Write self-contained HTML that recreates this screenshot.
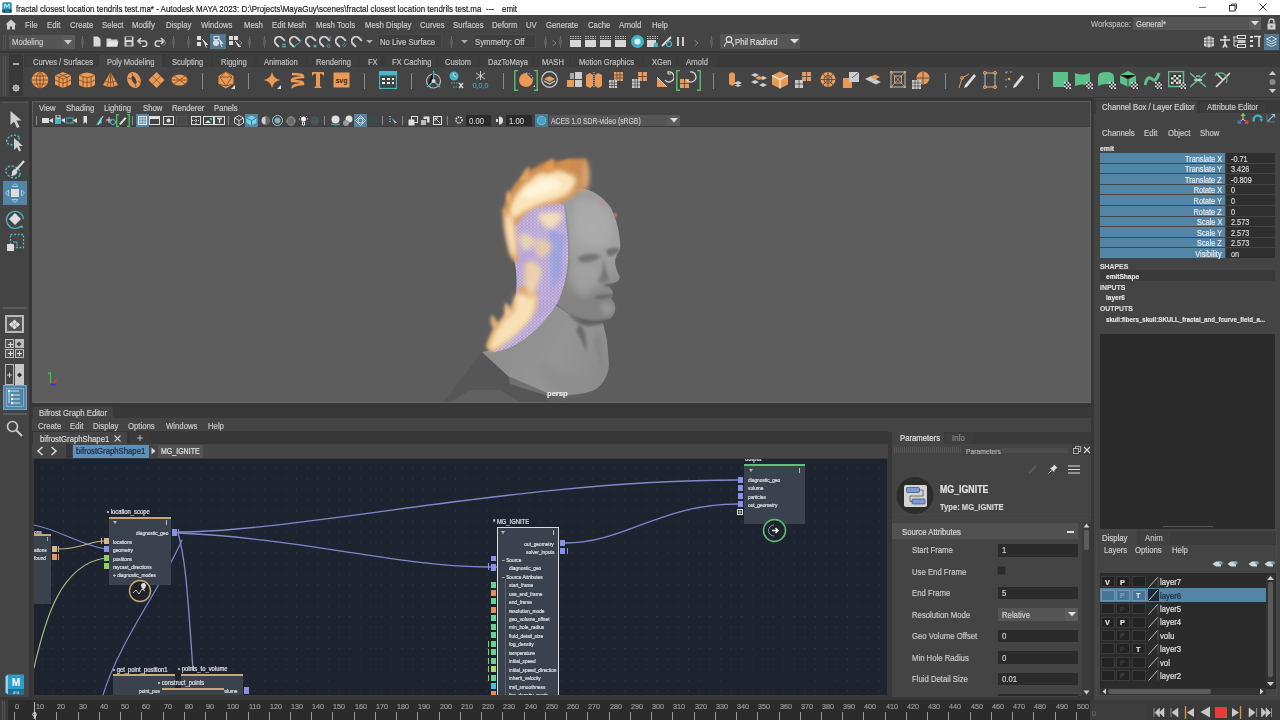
<!DOCTYPE html>
<html><head><meta charset="utf-8"><style>*{margin:0;padding:0;box-sizing:border-box}
html,body{width:1280px;height:720px;overflow:hidden;background:#444;font-family:"Liberation Sans",sans-serif}
.a{position:absolute;display:block}
.t{position:absolute;white-space:nowrap;line-height:1;transform-origin:0 0;-webkit-text-stroke:0.2px currentColor}
</style></head><body>
<div class="a" style="left:0px;top:0px;width:1280px;height:15px;background:#fff;"></div><svg class="a" style="left:2px;top:2px;" width="10" height="11" viewBox="0 0 10 11"><rect x="0.3" y="0.3" width="9.4" height="10.4" rx="1.5" fill="#2a8cb4"/><rect x="0.3" y="7.5" width="9.4" height="3.2" rx="1" fill="#17506e"/><path d="M2.2 6.5V1.8H3.6L5 4L6.4 1.8H7.8V6.5H6.7V3.6L5 5.8L3.3 3.6V6.5Z" fill="#b8f0fc"/><rect x="3" y="8.6" width="4" height="1" fill="#5a9ab8"/></svg><div class="t" style="left:15.5px;top:3.7px;font-size:9.5px;color:#1a1a1a;transform:scaleX(0.84);">fractal closest location tendrils test.ma* - Autodesk MAYA 2023: D:\Projects\MayaGuy\scenes\fractal closest location tendrils test.ma</div><div class="t" style="left:486.0px;top:3.7px;font-size:9.5px;color:#1a1a1a;transform:scaleX(0.84);">---</div><div class="t" style="left:502.0px;top:3.7px;font-size:9.5px;color:#1a1a1a;transform:scaleX(0.84);">emit</div><div class="a" style="left:1199px;top:6.5px;width:7px;height:1.5px;background:#7a7a7a;"></div><svg class="a" style="left:1228px;top:2px;" width="10" height="10" viewBox="0 0 10 10"><rect x="1.5" y="3.5" width="5.5" height="5.5" fill="none" stroke="#333" stroke-width="1"/><path d="M2.5 3.5L4 2H8.5V6.5L7 8" fill="none" stroke="#333" stroke-width="1"/></svg><svg class="a" style="left:1259px;top:3px;" width="8" height="8" viewBox="0 0 8 8"><path d="M0.5 0.5L7.5 7.5M7.5 0.5L0.5 7.5" stroke="#222" stroke-width="0.9"/></svg>
<div class="a" style="left:0px;top:15px;width:1280px;height:18px;background:#444;"></div><svg class="a" style="left:5px;top:19px;" width="12" height="11" viewBox="0 0 12 11"><path d="M6 0.5L0.5 5.5H2V10.5H5V7.5H7V10.5H10V5.5H11.5Z" fill="#d0d0d0"/></svg><div class="t" style="left:25.0px;top:20.9px;font-size:9px;color:#c8c8c8;transform:scaleX(0.86);">File</div><div class="t" style="left:46.6px;top:20.9px;font-size:9px;color:#c8c8c8;transform:scaleX(0.86);">Edit</div><div class="t" style="left:70.0px;top:20.9px;font-size:9px;color:#c8c8c8;transform:scaleX(0.86);">Create</div><div class="t" style="left:102.0px;top:20.9px;font-size:9px;color:#c8c8c8;transform:scaleX(0.86);">Select</div><div class="t" style="left:132.0px;top:20.9px;font-size:9px;color:#c8c8c8;transform:scaleX(0.86);">Modify</div><div class="t" style="left:166.0px;top:20.9px;font-size:9px;color:#c8c8c8;transform:scaleX(0.86);">Display</div><div class="t" style="left:201.0px;top:20.9px;font-size:9px;color:#c8c8c8;transform:scaleX(0.86);">Windows</div><div class="t" style="left:243.5px;top:20.9px;font-size:9px;color:#c8c8c8;transform:scaleX(0.86);">Mesh</div><div class="t" style="left:272.0px;top:20.9px;font-size:9px;color:#c8c8c8;transform:scaleX(0.86);">Edit Mesh</div><div class="t" style="left:316.0px;top:20.9px;font-size:9px;color:#c8c8c8;transform:scaleX(0.86);">Mesh Tools</div><div class="t" style="left:364.7px;top:20.9px;font-size:9px;color:#c8c8c8;transform:scaleX(0.86);">Mesh Display</div><div class="t" style="left:420.0px;top:20.9px;font-size:9px;color:#c8c8c8;transform:scaleX(0.86);">Curves</div><div class="t" style="left:452.8px;top:20.9px;font-size:9px;color:#c8c8c8;transform:scaleX(0.86);">Surfaces</div><div class="t" style="left:491.5px;top:20.9px;font-size:9px;color:#c8c8c8;transform:scaleX(0.86);">Deform</div><div class="t" style="left:526.4px;top:20.9px;font-size:9px;color:#c8c8c8;transform:scaleX(0.86);">UV</div><div class="t" style="left:546.4px;top:20.9px;font-size:9px;color:#c8c8c8;transform:scaleX(0.86);">Generate</div><div class="t" style="left:588.0px;top:20.9px;font-size:9px;color:#c8c8c8;transform:scaleX(0.86);">Cache</div><div class="t" style="left:619.0px;top:20.9px;font-size:9px;color:#c8c8c8;transform:scaleX(0.86);">Arnold</div><div class="t" style="left:652.0px;top:20.9px;font-size:9px;color:#c8c8c8;transform:scaleX(0.86);">Help</div><div class="t" style="left:1090.6px;top:20.4px;font-size:9px;color:#b8b8b8;transform:scaleX(0.84);">Workspace:</div><div class="a" style="left:1133px;top:17px;width:128px;height:13px;background:#555;"></div><div class="a" style="left:1249px;top:17px;width:12px;height:13px;background:#5e5e5e;"></div><div class="t" style="left:1136.0px;top:20.4px;font-size:9px;color:#d0d0d0;transform:scaleX(0.84);">General*</div><svg class="a" style="left:1251px;top:21px;" width="8" height="5" viewBox="0 0 8 5"><path d="M0 0H8L4 4.5Z" fill="#ddd"/></svg><svg class="a" style="left:1267px;top:18px;" width="9" height="12" viewBox="0 0 9 12"><path d="M2 5.5V3.5a2.5 2.5 0 0 1 5 0V5.5" fill="none" stroke="#d0d0d0" stroke-width="1.4"/><rect x="0.5" y="5.5" width="8" height="6" fill="#d0d0d0"/><rect x="3.5" y="7.5" width="2" height="2" fill="#777"/></svg>
<div class="a" style="left:0px;top:33px;width:1280px;height:19px;background:#444;"></div><div class="a" style="left:0px;top:51px;width:1280px;height:2px;background:#363636;"></div><div class="a" style="left:3px;top:35px;width:1px;height:14px;background:#555;"></div><div class="a" style="left:5px;top:35px;width:1px;height:14px;background:#555;"></div><div class="a" style="left:9px;top:35px;width:54px;height:14px;background:#555;"></div><div class="a" style="left:62px;top:35px;width:13px;height:14px;background:#5b5b5b;"></div><div class="t" style="left:11.5px;top:38.4px;font-size:9px;color:#c8c8c8;transform:scaleX(0.86);">Modeling</div><svg class="a" style="left:64px;top:40px;" width="8" height="5" viewBox="0 0 8 5"><path d="M0 0H8L4 4.5Z" fill="#ccc"/></svg><div class="a" style="left:82px;top:36px;width:1px;height:12px;background:#6a6a6a;"></div><div class="a" style="left:81px;top:39px;width:3px;height:6px;background:#5c5c5c;border-radius:1px"></div><div class="a" style="left:173px;top:36px;width:1px;height:12px;background:#6a6a6a;"></div><div class="a" style="left:172px;top:39px;width:3px;height:6px;background:#5c5c5c;border-radius:1px"></div><div class="a" style="left:188px;top:36px;width:1px;height:12px;background:#6a6a6a;"></div><div class="a" style="left:187px;top:39px;width:3px;height:6px;background:#5c5c5c;border-radius:1px"></div><div class="a" style="left:249px;top:36px;width:1px;height:12px;background:#6a6a6a;"></div><div class="a" style="left:248px;top:39px;width:3px;height:6px;background:#5c5c5c;border-radius:1px"></div><div class="a" style="left:264px;top:36px;width:1px;height:12px;background:#6a6a6a;"></div><div class="a" style="left:263px;top:39px;width:3px;height:6px;background:#5c5c5c;border-radius:1px"></div><div class="a" style="left:451px;top:36px;width:1px;height:12px;background:#6a6a6a;"></div><div class="a" style="left:450px;top:39px;width:3px;height:6px;background:#5c5c5c;border-radius:1px"></div><div class="a" style="left:545px;top:36px;width:1px;height:12px;background:#6a6a6a;"></div><div class="a" style="left:544px;top:39px;width:3px;height:6px;background:#5c5c5c;border-radius:1px"></div><svg class="a" style="left:93px;top:36px;" width="8" height="11" viewBox="0 0 8 11"><path d="M0.5 0.5H5L7.5 3V10.5H0.5Z" fill="#d8d8d8"/></svg><svg class="a" style="left:106px;top:37px;" width="13" height="10" viewBox="0 0 13 10"><path d="M0.5 1.5H4.5L5.5 2.5H11.5V9.5H0.5Z" fill="#cfcfcf"/><path d="M2.5 4.5H12.5L11 9.5H0.5Z" fill="#e6e6e6"/></svg><svg class="a" style="left:124px;top:36px;" width="10" height="11" viewBox="0 0 10 11"><rect x="0.5" y="0.5" width="9" height="10" fill="#d0d0d0"/><rect x="2" y="1" width="6" height="3" fill="#555"/><rect x="2.5" y="6" width="5" height="3.5" fill="#555"/></svg><svg class="a" style="left:137px;top:37px;" width="12" height="10" viewBox="0 0 12 10"><path d="M4 1L1 4L4 7M1 4H8A3 3 0 0 1 8 9.5H5" fill="none" stroke="#d0d0d0" stroke-width="1.6"/></svg><svg class="a" style="left:153px;top:37px;" width="12" height="10" viewBox="0 0 12 10"><path d="M8 1L11 4L8 7M11 4H4A3 3 0 0 0 4 9.5H7" fill="none" stroke="#d0d0d0" stroke-width="1.6"/></svg><svg class="a" style="left:197px;top:36px;" width="11" height="12" viewBox="0 0 11 12"><rect x="0" y="0" width="4" height="4" fill="#ddd"/><rect x="0" y="6" width="4" height="4" fill="#ddd"/><path d="M5 3L10.5 8.5L8 8.5L9.5 11.5" fill="#ddd" stroke="#ddd"/></svg><div class="a" style="left:210px;top:34px;width:16px;height:15px;background:#4f7896;"></div><svg class="a" style="left:212px;top:36px;" width="12" height="12" viewBox="0 0 12 12"><circle cx="4" cy="7" r="3" fill="#ddd"/><path d="M6 2L11 7.5L8.5 7.5L10 11" fill="#ddd" stroke="#ddd"/><rect x="2" y="0.5" width="5" height="3" fill="none" stroke="#ddd"/></svg><svg class="a" style="left:229px;top:36px;" width="12" height="12" viewBox="0 0 12 12"><rect x="0" y="0" width="4" height="4" fill="#ddd"/><rect x="5" y="0" width="4" height="4" fill="#ddd"/><rect x="0" y="5" width="4" height="4" fill="#ddd"/><path d="M6 5L11.5 10.5L9 10.5" fill="#ddd" stroke="#ddd"/></svg><svg class="a" style="left:238px;top:40px;" width="5" height="6" viewBox="0 0 5 6"><path d="M0.5 0L4 3L0.5 6" fill="none" stroke="#888"/></svg><svg class="a" style="left:162px;top:40px;" width="5" height="6" viewBox="0 0 5 6"><path d="M0.5 0L4 3L0.5 6" fill="none" stroke="#888"/></svg><svg class="a" style="left:274px;top:36px;" width="13" height="13" viewBox="0 0 13 13"><path d="M4.9 10.9L2 8A4.1 4.1 0 1 1 8 2L10.9 4.9" fill="none" stroke="#d0d0d0" stroke-width="1.9"/><path d="M8 8.5H12M8 10.5H12M9 7.5V12M11 7.5V12" stroke="#48b0b8" stroke-width="0.8"/></svg><svg class="a" style="left:289px;top:36px;" width="13" height="13" viewBox="0 0 13 13"><path d="M4.9 10.9L2 8A4.1 4.1 0 1 1 8 2L10.9 4.9" fill="none" stroke="#d0d0d0" stroke-width="1.9"/><path d="M5 12Q6 8 9 8Q11 7 12 4" fill="none" stroke="#48b0b8" stroke-width="1"/></svg><svg class="a" style="left:305px;top:36px;" width="13" height="13" viewBox="0 0 13 13"><path d="M4.9 10.9L2 8A4.1 4.1 0 1 1 8 2L10.9 4.9" fill="none" stroke="#d0d0d0" stroke-width="1.9"/><circle cx="10" cy="10" r="1.6" fill="#48b0b8"/></svg><svg class="a" style="left:319px;top:36px;" width="13" height="13" viewBox="0 0 13 13"><path d="M4.9 10.9L2 8A4.1 4.1 0 1 1 8 2L10.9 4.9" fill="none" stroke="#d0d0d0" stroke-width="1.9"/><circle cx="9.5" cy="10" r="1.4" fill="none" stroke="#48b0b8" stroke-width="0.8"/><circle cx="11" cy="1.5" r="1" fill="none" stroke="#48b0b8" stroke-width="0.6"/></svg><svg class="a" style="left:335px;top:36px;" width="13" height="13" viewBox="0 0 13 13"><path d="M4.9 10.9L2 8A4.1 4.1 0 1 1 8 2L10.9 4.9" fill="none" stroke="#d0d0d0" stroke-width="1.9"/><path d="M7 10L10 7M8.5 11.5L11.5 8.5" stroke="#48b0b8" stroke-width="0.9"/></svg><svg class="a" style="left:351px;top:36px;" width="13" height="13" viewBox="0 0 13 13"><path d="M4.9 10.9L2 8A4.1 4.1 0 1 1 8 2L10.9 4.9" fill="none" stroke="#d0d0d0" stroke-width="1.9"/></svg><svg class="a" style="left:366px;top:40px;" width="7" height="4" viewBox="0 0 7 4"><path d="M0 0H7L3.5 3.5Z" fill="#aaa"/></svg><div class="a" style="left:377px;top:34px;width:65px;height:14px;background:#3e3e3e;border:1px solid #4a4a4a"></div><div class="t" style="left:380.0px;top:37.9px;font-size:9px;color:#c8c8c8;transform:scaleX(0.86);">No Live Surface</div><svg class="a" style="left:461px;top:40px;" width="7" height="4" viewBox="0 0 7 4"><path d="M0 0H7L3.5 3.5Z" fill="#aaa"/></svg><div class="a" style="left:472px;top:34px;width:64px;height:14px;background:#3e3e3e;border:1px solid #4a4a4a"></div><div class="t" style="left:474.5px;top:37.9px;font-size:9px;color:#c8c8c8;transform:scaleX(0.86);">Symmetry: Off</div><svg class="a" style="left:552px;top:40px;" width="5" height="6" viewBox="0 0 5 6"><path d="M0.5 0L4 3L0.5 6" fill="none" stroke="#888"/></svg><div class="a" style="left:560px;top:36px;width:1px;height:12px;background:#6a6a6a;"></div><div class="a" style="left:559px;top:39px;width:3px;height:6px;background:#5c5c5c;border-radius:1px"></div><div class="a" style="left:592px;top:36px;width:1px;height:12px;background:#6a6a6a;"></div><div class="a" style="left:591px;top:39px;width:3px;height:6px;background:#5c5c5c;border-radius:1px"></div><svg class="a" style="left:570px;top:36px;" width="11" height="11" viewBox="0 0 11 11"><path d="M0 0.5H11M0 2.5H11" stroke="#bbb" stroke-dasharray="1.5 1"/><rect x="0" y="4" width="11" height="7" fill="#d8d8d8"/></svg><svg class="a" style="left:585px;top:36px;" width="11" height="11" viewBox="0 0 11 11"><path d="M0 0.5H11M0 2.5H11" stroke="#bbb" stroke-dasharray="1.5 1"/><rect x="0" y="4" width="11" height="7" fill="#d8d8d8"/></svg><svg class="a" style="left:600px;top:36px;" width="11" height="11" viewBox="0 0 11 11"><path d="M0 0.5H11M0 2.5H11" stroke="#bbb" stroke-dasharray="1.5 1"/><rect x="0" y="4" width="11" height="7" fill="#d8d8d8"/></svg><svg class="a" style="left:615px;top:36px;" width="11" height="11" viewBox="0 0 11 11"><path d="M0 0.5H11M0 2.5H11" stroke="#bbb" stroke-dasharray="1.5 1"/><rect x="0" y="4" width="11" height="7" fill="#d8d8d8"/></svg><svg class="a" style="left:631px;top:35px;" width="13" height="13" viewBox="0 0 13 13"><circle cx="6.5" cy="6.5" r="6.5" fill="#42b4c8"/><circle cx="6.5" cy="6.5" r="3" fill="#d8f0f4"/></svg><svg class="a" style="left:647px;top:36px;" width="11" height="11" viewBox="0 0 11 11"><path d="M0 0.5H11M0 2.5H11" stroke="#bbb" stroke-dasharray="1.5 1"/><rect x="0" y="4" width="9" height="7" fill="#d8d8d8"/><circle cx="9" cy="9" r="2.5" fill="#48b0c8"/></svg><svg class="a" style="left:661px;top:36px;" width="11" height="11" viewBox="0 0 11 11"><path d="M1 10L10 1" stroke="#ddd" stroke-width="2"/><circle cx="8" cy="8" r="2.5" fill="none" stroke="#48b0c8" stroke-width="1.3"/></svg><div class="a" style="left:677px;top:37px;width:2px;height:9px;background:#ccc;"></div><div class="a" style="left:682px;top:37px;width:2px;height:9px;background:#ccc;"></div><svg class="a" style="left:694px;top:40px;" width="5" height="6" viewBox="0 0 5 6"><path d="M0.5 0L4 3L0.5 6" fill="none" stroke="#888"/></svg><div class="a" style="left:711px;top:36px;width:1px;height:12px;background:#6a6a6a;"></div><div class="a" style="left:710px;top:39px;width:3px;height:6px;background:#5c5c5c;border-radius:1px"></div><div class="a" style="left:720px;top:34px;width:80px;height:15px;background:#555;"></div><svg class="a" style="left:724px;top:36px;" width="10" height="11" viewBox="0 0 10 11"><circle cx="5" cy="3.5" r="2.8" fill="none" stroke="#ddd" stroke-width="1.2"/><path d="M0.5 10.5A4.5 4.5 0 0 1 9.5 10.5" fill="none" stroke="#ddd" stroke-width="1.2"/></svg><div class="t" style="left:735.0px;top:38.4px;font-size:9px;color:#dcdcdc;transform:scaleX(0.86);">Phil Radford</div><svg class="a" style="left:790px;top:39px;" width="9" height="5" viewBox="0 0 9 5"><path d="M0 0H9L4.5 4.5Z" fill="#ddd"/></svg><svg class="a" style="left:1203px;top:35px;" width="12" height="13" viewBox="0 0 12 13"><path d="M1 3L6 1L11 3V11L6 12.5L1 11Z" fill="#cfcfcf"/><path d="M1 5H11M1 8H11M4 2V12M8 2V12" stroke="#555" stroke-width="0.8"/></svg><svg class="a" style="left:1219px;top:35px;" width="12" height="13" viewBox="0 0 12 13"><circle cx="6" cy="2" r="1.6" fill="#ddd"/><path d="M1 5H11M6 4V9M6 9L4 12.5M6 9L8 12.5" stroke="#ddd" stroke-width="1.6"/></svg><svg class="a" style="left:1233px;top:35px;" width="13" height="13" viewBox="0 0 13 13"><rect x="4.5" y="0.5" width="8" height="3" fill="none" stroke="#ddd"/><rect x="4.5" y="5" width="8" height="3" fill="#ccc"/><rect x="4.5" y="9.5" width="8" height="3" fill="none" stroke="#ddd"/><path d="M0 2H4M1 6H4M1 11H4M1 2V11" stroke="#ddd"/></svg><svg class="a" style="left:1250px;top:35px;" width="12" height="13" viewBox="0 0 12 13"><rect x="0" y="1" width="3" height="2" fill="#ddd"/><rect x="0" y="5" width="3" height="2" fill="#ddd"/><rect x="0" y="10" width="3" height="2" fill="#ddd"/><path d="M4 1.5H11M9 1V12" stroke="#ddd" stroke-width="1.6"/></svg><div class="a" style="left:1264px;top:34px;width:15px;height:16px;background:#4f7896;"></div><svg class="a" style="left:1266px;top:36px;" width="11" height="12" viewBox="0 0 11 12"><path d="M5.5 0.5L10.5 3L5.5 5.5L0.5 3Z" fill="none" stroke="#ddd"/><path d="M0.5 5.5L5.5 8L10.5 5.5M0.5 8L5.5 10.5L10.5 8" fill="none" stroke="#ddd"/></svg>
<div class="a" style="left:0px;top:53px;width:1280px;height:45px;background:#444;"></div><div class="a" style="left:0px;top:97px;width:1280px;height:4px;background:#373737;"></div><div class="a" style="left:3px;top:56px;width:1px;height:40px;background:#555;"></div><div class="a" style="left:5px;top:56px;width:1px;height:40px;background:#555;"></div><div class="a" style="left:9px;top:54px;width:14px;height:42px;background:#393939;"></div><div class="a" style="left:13px;top:63px;width:6px;height:2px;background:#aaa;"></div><svg class="a" style="left:12px;top:84px;" width="8" height="8" viewBox="0 0 8 8"><circle cx="4" cy="4" r="2.4" fill="none" stroke="#bbb" stroke-width="1.4"/><path d="M4 0V8M0 4H8M1.2 1.2L6.8 6.8M6.8 1.2L1.2 6.8" stroke="#bbb" stroke-width="0.9"/></svg><div class="a" style="left:24px;top:54px;width:1256px;height:13px;background:#3a3a3a;"></div><div class="a" style="left:26px;top:55px;width:71px;height:12px;background:#3d3d3d;"></div><div class="t" style="left:33.0px;top:57.9px;font-size:9px;color:#c0c0c0;transform:scaleX(0.84);">Curves / Surfaces</div><div class="a" style="left:99px;top:55px;width:63px;height:12px;background:#444;"></div><div class="t" style="left:106.5px;top:57.9px;font-size:9px;color:#c0c0c0;transform:scaleX(0.84);">Poly Modeling</div><div class="a" style="left:165px;top:55px;width:46px;height:12px;background:#3d3d3d;"></div><div class="t" style="left:172.0px;top:57.9px;font-size:9px;color:#c0c0c0;transform:scaleX(0.84);">Sculpting</div><div class="a" style="left:213px;top:55px;width:41px;height:12px;background:#3d3d3d;"></div><div class="t" style="left:220.6px;top:57.9px;font-size:9px;color:#c0c0c0;transform:scaleX(0.84);">Rigging</div><div class="a" style="left:257px;top:55px;width:49px;height:12px;background:#3d3d3d;"></div><div class="t" style="left:264.0px;top:57.9px;font-size:9px;color:#c0c0c0;transform:scaleX(0.84);">Animation</div><div class="a" style="left:308px;top:55px;width:50px;height:12px;background:#3d3d3d;"></div><div class="t" style="left:315.6px;top:57.9px;font-size:9px;color:#c0c0c0;transform:scaleX(0.84);">Rendering</div><div class="a" style="left:360px;top:55px;width:21px;height:12px;background:#3d3d3d;"></div><div class="t" style="left:367.5px;top:57.9px;font-size:9px;color:#c0c0c0;transform:scaleX(0.84);">FX</div><div class="a" style="left:385px;top:55px;width:51px;height:12px;background:#3d3d3d;"></div><div class="t" style="left:392.0px;top:57.9px;font-size:9px;color:#c0c0c0;transform:scaleX(0.84);">FX Caching</div><div class="a" style="left:438px;top:55px;width:40px;height:12px;background:#3d3d3d;"></div><div class="t" style="left:445.0px;top:57.9px;font-size:9px;color:#c0c0c0;transform:scaleX(0.84);">Custom</div><div class="a" style="left:480px;top:55px;width:52px;height:12px;background:#3d3d3d;"></div><div class="t" style="left:487.5px;top:57.9px;font-size:9px;color:#c0c0c0;transform:scaleX(0.84);">DazToMaya</div><div class="a" style="left:535px;top:55px;width:34px;height:12px;background:#3d3d3d;"></div><div class="t" style="left:542.0px;top:57.9px;font-size:9px;color:#c0c0c0;transform:scaleX(0.84);">MASH</div><div class="a" style="left:571px;top:55px;width:71px;height:12px;background:#3d3d3d;"></div><div class="t" style="left:578.5px;top:57.9px;font-size:9px;color:#c0c0c0;transform:scaleX(0.84);">Motion Graphics</div><div class="a" style="left:644px;top:55px;width:32px;height:12px;background:#3d3d3d;"></div><div class="t" style="left:651.5px;top:57.9px;font-size:9px;color:#c0c0c0;transform:scaleX(0.84);">XGen</div><div class="a" style="left:679px;top:55px;width:38px;height:12px;background:#3d3d3d;"></div><div class="t" style="left:686.0px;top:57.9px;font-size:9px;color:#c0c0c0;transform:scaleX(0.84);">Arnold</div><div class="a" style="left:24px;top:67px;width:1256px;height:1px;background:#444;"></div><svg class="a" style="left:31px;top:71px;" width="19" height="19" viewBox="0 0 19 19"><circle cx="9" cy="9" r="8.3" fill="#e89a56"/><path d="M1 9H17M2.5 5H15.5M2.5 13H15.5M9 0.7V17.3M9 0.7C4 4 4 14 9 17.3M9 0.7C14 4 14 14 9 17.3" fill="none" stroke="#7a4a20" stroke-width="0.8"/></svg><svg class="a" style="left:54px;top:71px;" width="19" height="19" viewBox="0 0 19 19"><path d="M9 1L17 4.5V13.5L9 17L1 13.5V4.5Z" fill="#e89a56"/><path d="M1 4.5L9 8L17 4.5M9 8V17M5 2.8L13 6.3M13 2.8L5 6.3M1 9L9 12.5L17 9M5 6.3V15.3M13 6.3V15.3" fill="none" stroke="#7a4a20" stroke-width="0.8"/></svg><svg class="a" style="left:78px;top:71px;" width="19" height="19" viewBox="0 0 19 19"><path d="M1 4Q9 -1 17 4V14Q9 19 1 14Z" fill="#e89a56"/><path d="M1 4Q9 9 17 4M1 9Q9 14 17 9M9 6.5V17M5 5.5V16M13 5.5V16" fill="none" stroke="#7a4a20" stroke-width="0.8"/></svg><svg class="a" style="left:102px;top:71px;" width="19" height="19" viewBox="0 0 19 19"><path d="M8.5 1L16 14Q8.5 18 1 14Z" fill="#e89a56"/><path d="M8.5 1V16.5M3 10Q8.5 13 14 10M8.5 1L5 15.5M8.5 1L12 15.5" fill="none" stroke="#7a4a20" stroke-width="0.8"/></svg><svg class="a" style="left:126px;top:71px;" width="19" height="19" viewBox="0 0 19 19"><ellipse cx="8" cy="9" rx="6.5" ry="8.3" fill="#e89a56" transform="rotate(-25 8 9)"/><ellipse cx="8" cy="9" rx="2" ry="4.2" fill="#444" transform="rotate(-25 8 9)"/><path d="M2 7L5 8M12 10L15 12M6 2L7 5M9 13L10 16" stroke="#7a4a20" stroke-width="0.8"/></svg><svg class="a" style="left:148px;top:71px;" width="19" height="19" viewBox="0 0 19 19"><path d="M8.5 1L16.5 9L8.5 17L0.5 9Z" fill="#e89a56"/><path d="M4.5 5L12.5 13M12.5 5L4.5 13" stroke="#7a4a20" stroke-width="0.8"/></svg><svg class="a" style="left:171px;top:71px;" width="19" height="19" viewBox="0 0 19 19"><ellipse cx="8.5" cy="9" rx="8" ry="5.5" fill="#e89a56"/><path d="M0.5 9H16.5M3 5L14 13M14 5L3 13" stroke="#7a4a20" stroke-width="0.8"/></svg><svg class="a" style="left:217px;top:71px;" width="19" height="19" viewBox="0 0 19 19"><path d="M9 0.5L16.5 5V13L9 17.5L1.5 13V5Z" fill="#e89a56"/><path d="M3 6H15L9 15ZM9 0.5L3 6M9 0.5L15 6M1.5 13L9 15L16.5 13" fill="none" stroke="#7a4a20" stroke-width="0.8"/><path d="M14 18L18 14V18Z" fill="#ddd"/></svg><svg class="a" style="left:263px;top:71px;" width="19" height="19" viewBox="0 0 19 19"><path d="M9 0.5Q10 8 17.5 9Q10 10 9 17.5Q8 10 0.5 9Q8 8 9 0.5Z" fill="#e89a56"/><path d="M14 18L18 14V18Z" fill="#ddd"/></svg><svg class="a" style="left:289px;top:71px;" width="19" height="19" viewBox="0 0 19 19"><path d="M3 3Q15 3 14 6Q2 7 3 10Q15 10 14 13Q2 14 4 17" fill="none" stroke="#e89a56" stroke-width="2.6"/></svg><svg class="a" style="left:311px;top:71px;" width="19" height="19" viewBox="0 0 19 19"><path d="M1 1H13V4.5H12Q11.5 2.5 9 2.5V15.5H10.5V17H3.5V15.5H5V2.5Q2.5 2.5 2 4.5H1Z" fill="#e89a56"/></svg><svg class="a" style="left:333px;top:71px;" width="19" height="19" viewBox="0 0 19 19"><rect x="0.5" y="1.5" width="16" height="15" fill="#e89a56"/><text x="8.5" y="11.5" font-size="7" fill="#3a2a1a" text-anchor="middle" font-family="Liberation Sans" font-weight="bold">svg</text></svg><div class="a" style="left:202px;top:73px;width:1px;height:16px;background:#8a8a8a;"></div><div class="a" style="left:248px;top:73px;width:1px;height:16px;background:#8a8a8a;"></div><div class="a" style="left:364px;top:73px;width:1px;height:16px;background:#8a8a8a;"></div><div class="a" style="left:411px;top:73px;width:1px;height:16px;background:#8a8a8a;"></div><div class="a" style="left:503px;top:73px;width:1px;height:16px;background:#8a8a8a;"></div><div class="a" style="left:713px;top:73px;width:1px;height:16px;background:#8a8a8a;"></div><div class="a" style="left:945px;top:73px;width:1px;height:16px;background:#8a8a8a;"></div><div class="a" style="left:1038px;top:73px;width:1px;height:16px;background:#8a8a8a;"></div><svg class="a" style="left:379px;top:71px;" width="18" height="18" viewBox="0 0 18 18"><rect x="0.5" y="0.5" width="17" height="17" fill="none" stroke="#48b8c8" stroke-width="1.2"/><rect x="0.5" y="0.5" width="17" height="4" fill="#48b8c8"/><path d="M3 8H6M8 8H11M13 8H15M3 12H6M8 12H11M13 12H15" stroke="#cfe" stroke-width="2"/></svg><svg class="a" style="left:425px;top:71px;" width="17" height="18" viewBox="0 0 17 18"><circle cx="8.5" cy="10" r="7" fill="none" stroke="#bbb" stroke-width="1.2"/><path d="M8.5 0V10L2 16M8.5 10L15 16" stroke="#48b8c8" stroke-width="1.3"/><circle cx="8.5" cy="10" r="2" fill="#ddd"/></svg><svg class="a" style="left:449px;top:71px;" width="15" height="18" viewBox="0 0 15 18"><circle cx="5" cy="5" r="4.5" fill="#48b8c8"/><path d="M5 2V5H7.5" stroke="#fff" stroke-width="1"/><path d="M2 12H10M4 16H9" stroke="#48b8c8" stroke-dasharray="1.5 1"/><path d="M10 12L14 17M14 12L10 17" stroke="#ddd" stroke-width="1.3"/></svg><svg class="a" style="left:471px;top:71px;" width="19" height="18" viewBox="0 0 19 18"><path d="M9.5 0V9M5 2L14 8M14 2L5 8" stroke="#ccc" stroke-width="1"/><text x="9.5" y="17" font-size="7" fill="#48b8c8" text-anchor="middle" font-family="Liberation Sans">0,0,0</text></svg><svg class="a" style="left:514px;top:70px;" width="24" height="21" viewBox="0 0 24 21"><path d="M4 0.5H0.8V20.2H4M20 0.5H23.2V20.2H20" fill="none" stroke="#4fc46a" stroke-width="1.4"/><path d="M12 3A7 7 0 1 0 19 10" fill="#e89a56"/><path d="M12 3A7 7 0 0 1 19 10" fill="none" stroke="#ccc" stroke-dasharray="1.5 1.2"/><path d="M19 17L21 15V17Z" fill="#ddd"/></svg><svg class="a" style="left:541px;top:71px;" width="17" height="17" viewBox="0 0 17 17"><circle cx="8.5" cy="8.5" r="7.8" fill="none" stroke="#ccc" stroke-width="1.2"/><path d="M3 8L8.5 5L14 8L8.5 11Z" fill="#e89a56"/><path d="M3 10L8.5 13L14 10" fill="none" stroke="#ccc" stroke-width="1.2"/></svg><svg class="a" style="left:567px;top:72px;" width="15" height="16" viewBox="0 0 15 16"><rect x="0" y="8" width="7" height="7" fill="#e89a56"/><rect x="8" y="0" width="7" height="7" fill="#ccc"/><rect x="8" y="8" width="7" height="7" fill="#ccc"/><rect x="0" y="0" width="7" height="7" fill="#444"/><rect x="3" y="1" width="4" height="6" fill="#aaa"/></svg><svg class="a" style="left:586px;top:72px;" width="16" height="16" viewBox="0 0 16 16"><path d="M0 3L4 1L7 3V14L4 16L0 14Z" fill="#e89a56"/><path d="M9 3L12 1L16 3V14L12 16L9 14Z" fill="#e89a56"/><path d="M8 0V16" stroke="#ddd" stroke-dasharray="1 1"/></svg><svg class="a" style="left:609px;top:72px;" width="14" height="16" viewBox="0 0 14 16"><rect x="5" y="0" width="9" height="9" fill="#e89a56"/><path d="M5 3H14M5 6H14M8 0V9M11 0V9" stroke="#444" stroke-width="0.7"/><rect x="0" y="8" width="8" height="8" fill="#ccc"/><path d="M0 11H8M0 13.5H8M3 8V16M5.5 8V16" stroke="#444" stroke-width="0.7"/></svg><svg class="a" style="left:632px;top:72px;" width="15" height="16" viewBox="0 0 15 16"><rect x="6" y="0" width="9" height="9" fill="#e89a56"/><path d="M6 4.5H15M10.5 0V9" stroke="#444" stroke-width="0.8"/><rect x="0" y="7" width="8" height="9" fill="#ccc"/><path d="M0 10H8M0 13H8M3 7V16M5.5 7V16" stroke="#444" stroke-width="0.7"/></svg><svg class="a" style="left:657px;top:71px;" width="17" height="18" viewBox="0 0 17 18"><path d="M0 6L10 16H0Z" fill="#e89a56"/><path d="M0 6L10 16" stroke="#ccc"/><path d="M11 1A5 5 0 1 1 8 9" fill="none" stroke="#ddd" stroke-width="1.2"/><path d="M11 0V3H14" fill="none" stroke="#ddd"/></svg><svg class="a" style="left:676px;top:70px;" width="25" height="21" viewBox="0 0 25 21"><path d="M4 0.5H0.8V20.2H4M21 0.5H24.2V20.2H21" fill="none" stroke="#4fc46a" stroke-width="1.4"/><rect x="4" y="9" width="9" height="9" fill="#e89a56"/><path d="M4 13.5H13M8.5 9V18" stroke="#444" stroke-width="0.8"/><path d="M14 2A5 5 0 1 1 11 10" fill="none" stroke="#ddd" stroke-width="1.2"/></svg><svg class="a" style="left:728px;top:72px;" width="14" height="16" viewBox="0 0 14 16"><path d="M1 2L4 0L7 2V12L4 14L1 12Z" fill="#e89a56"/><path d="M6 11L10 9L14 11L10 13ZM6 13L10 15L14 13" fill="#ccc"/></svg><svg class="a" style="left:750px;top:72px;" width="19" height="16" viewBox="0 0 19 16"><path d="M1 3L5 1L9 3L5 5ZM9 6L13 4L17 6L13 8ZM1 10L5 8L9 10L5 12ZM9 13L13 11L17 13L13 15Z" fill="#ccc"/><path d="M5 6L9 4L13 6L9 8Z" fill="#e89a56"/></svg><svg class="a" style="left:771px;top:71px;" width="18" height="18" viewBox="0 0 18 18"><path d="M9 0.5L17 4.5V13.5L9 17.5L1 13.5V4.5Z" fill="#e89a56"/><path d="M1 4.5L9 8.5L17 4.5M9 8.5V17.5" fill="none" stroke="#eee" stroke-width="1.2"/></svg><svg class="a" style="left:795px;top:72px;" width="16" height="16" viewBox="0 0 16 16"><rect x="7" y="0" width="9" height="9" fill="#e89a56"/><path d="M7 4.5H16M11.5 0V9" stroke="#444" stroke-width="0.8"/><rect x="0" y="8" width="8" height="8" fill="#ccc"/><path d="M0 12H8M4 8V16" stroke="#444" stroke-width="0.8"/></svg><svg class="a" style="left:820px;top:71px;" width="16" height="17" viewBox="0 0 16 17"><circle cx="8" cy="8.5" r="7.5" fill="#e89a56"/><circle cx="8" cy="8.5" r="4" fill="none" stroke="#444" stroke-width="0.8"/><path d="M0.5 8.5H15.5M8 1V16M3 3L13 14M13 3L3 14" stroke="#444" stroke-width="0.8"/></svg><svg class="a" style="left:843px;top:72px;" width="16" height="16" viewBox="0 0 16 16"><path d="M0 6H9V16H0Z" fill="#e89a56"/><path d="M6 0H16V10H6Z" fill="#ccc"/><path d="M0 6L6 0M9 6L16 0M9 16L16 10" stroke="#444" stroke-width="0.8"/></svg><svg class="a" style="left:865px;top:72px;" width="17" height="14" viewBox="0 0 17 14"><path d="M0 7L6 4L12 7L6 10Z" fill="#ccc"/><path d="M5 5L10 2.5L15 5L10 7.5Z" fill="#e89a56"/><path d="M6 10L11 12.5L16 10L11 7.5Z" fill="#ccc"/></svg><svg class="a" style="left:890px;top:71px;" width="16" height="17" viewBox="0 0 16 17"><rect x="1" y="1" width="14" height="15" fill="none" stroke="#bbb"/><rect x="4.5" y="5" width="7" height="7" fill="none" stroke="#e89a56"/><path d="M1 1L15 16M15 1L1 16" stroke="#bbb" stroke-width="0.7"/><circle cx="1" cy="1" r="1.3" fill="#e89a56"/><circle cx="15" cy="16" r="1.3" fill="#e89a56"/><circle cx="15" cy="1" r="1.3" fill="#e89a56"/><circle cx="1" cy="16" r="1.3" fill="#e89a56"/></svg><svg class="a" style="left:912px;top:71px;" width="18" height="18" viewBox="0 0 18 18"><circle cx="11" cy="7" r="6.5" fill="#e89a56"/><path d="M4.5 7H17.5M11 0.5V13.5" stroke="#444" stroke-width="0.8"/><rect x="0" y="9" width="9" height="9" fill="#ccc"/><path d="M0 12H9M0 15H9M3 9V18M6 9V18" stroke="#444" stroke-width="0.7"/></svg><svg class="a" style="left:958px;top:72px;" width="18" height="17" viewBox="0 0 18 17"><path d="M1 16L4 6L11 2" fill="none" stroke="#e89a56" stroke-width="1"/><circle cx="4" cy="6" r="1.5" fill="none" stroke="#e89a56"/><path d="M7 13L16 2L18 4L9 15L6 16Z" fill="#ddd"/></svg><svg class="a" style="left:983px;top:71px;" width="19" height="18" viewBox="0 0 19 18"><rect x="2" y="2" width="10" height="14" fill="none" stroke="#bbb"/><circle cx="2" cy="2" r="1.6" fill="none" stroke="#e89a56"/><circle cx="12" cy="2" r="1.6" fill="none" stroke="#e89a56"/><circle cx="2" cy="16" r="1.6" fill="none" stroke="#e89a56"/><circle cx="12" cy="16" r="1.6" fill="none" stroke="#e89a56"/></svg><svg class="a" style="left:1005px;top:71px;" width="20" height="18" viewBox="0 0 20 18"><path d="M1 1H4M1 1V4M1 8V11M1 15V18M5 1H8" stroke="#bbb" stroke-dasharray="1.5 1.5"/><path d="M9 14L17 4L19 6L11 16L8 17Z" fill="#ddd"/><circle cx="4" cy="8" r="1.3" fill="#e89a56"/></svg><svg class="a" style="left:1053px;top:71px;" width="19" height="19" viewBox="0 0 19 19"><rect x="0" y="1" width="15" height="15" fill="#5cc08a"/><rect x="11" y="11" width="7" height="7" fill="#222"/><path d="M11 11h1.75v1.75H11zM14.5 11h1.75v1.75H14.5zM12.75 12.75h1.75v1.75h-1.75zM16.25 12.75H18v1.75h-1.75zM11 14.5h1.75v1.75H11zM14.5 14.5h1.75v1.75H14.5zM12.75 16.25h1.75V18h-1.75zM16.25 16.25H18V18h-1.75z" fill="#eee"/></svg><svg class="a" style="left:1075px;top:71px;" width="19" height="19" viewBox="0 0 19 19"><path d="M0 2Q7 5 15 2V15Q7 12 0 15Z" fill="#5cc08a"/><rect x="11" y="11" width="7" height="7" fill="#222"/><path d="M11 11h1.75v1.75H11zM14.5 11h1.75v1.75H14.5zM12.75 12.75h1.75v1.75h-1.75zM16.25 12.75H18v1.75h-1.75zM11 14.5h1.75v1.75H11zM14.5 14.5h1.75v1.75H14.5zM12.75 16.25h1.75V18h-1.75zM16.25 16.25H18V18h-1.75z" fill="#eee"/></svg><svg class="a" style="left:1098px;top:71px;" width="19" height="19" viewBox="0 0 19 19"><path d="M0 6Q0 1 8 1Q16 1 16 6V15Q8 11 0 15Z" fill="#5cc08a"/><rect x="11" y="11" width="7" height="7" fill="#222"/><path d="M11 11h1.75v1.75H11zM14.5 11h1.75v1.75H14.5zM12.75 12.75h1.75v1.75h-1.75zM16.25 12.75H18v1.75h-1.75zM11 14.5h1.75v1.75H11zM14.5 14.5h1.75v1.75H14.5zM12.75 16.25h1.75V18h-1.75zM16.25 16.25H18V18h-1.75z" fill="#eee"/></svg><svg class="a" style="left:1120px;top:71px;" width="19" height="19" viewBox="0 0 19 19"><path d="M8 0L16 4V12L8 16L0 12V4Z" fill="#5cc08a"/><path d="M0 4L8 8L16 4M8 8V16" stroke="#444" stroke-width="1"/><rect x="11" y="11" width="7" height="7" fill="#222"/><path d="M11 11h1.75v1.75H11zM14.5 11h1.75v1.75H14.5zM12.75 12.75h1.75v1.75h-1.75zM16.25 12.75H18v1.75h-1.75zM11 14.5h1.75v1.75H11zM14.5 14.5h1.75v1.75H14.5zM12.75 16.25h1.75V18h-1.75zM16.25 16.25H18V18h-1.75z" fill="#eee"/></svg><svg class="a" style="left:1144px;top:71px;" width="19" height="19" viewBox="0 0 19 19"><path d="M1 14Q3 4 8 8Q12 12 15 2" fill="none" stroke="#5cc08a" stroke-width="3"/><rect x="11" y="11" width="7" height="7" fill="#222"/><path d="M11 11h1.75v1.75H11zM14.5 11h1.75v1.75H14.5zM12.75 12.75h1.75v1.75h-1.75zM16.25 12.75H18v1.75h-1.75zM11 14.5h1.75v1.75H11zM14.5 14.5h1.75v1.75H14.5zM12.75 16.25h1.75V18h-1.75zM16.25 16.25H18V18h-1.75z" fill="#eee"/></svg><svg class="a" style="left:1168px;top:71px;" width="19" height="19" viewBox="0 0 19 19"><rect x="0.5" y="0.5" width="15" height="15" fill="none" stroke="#5cc08a" stroke-width="1.5"/><rect x="3" y="4" width="10" height="9" fill="#ddd"/><path d="M3 4h2.5v2.25H3zM8 4h2.5v2.25H8zM5.5 6.25h2.5v2.25H5.5zM10.5 6.25H13v2.25h-2.5zM3 8.5h2.5v2.25H3zM8 8.5h2.5v2.25H8zM5.5 10.75h2.5V13H5.5zM10.5 10.75H13V13h-2.5z" fill="#333"/><rect x="11" y="11" width="7" height="7" fill="#222"/><path d="M11 11h1.75v1.75H11zM14.5 11h1.75v1.75H14.5zM12.75 12.75h1.75v1.75h-1.75zM16.25 12.75H18v1.75h-1.75zM11 14.5h1.75v1.75H11zM14.5 14.5h1.75v1.75H14.5zM12.75 16.25h1.75V18h-1.75zM16.25 16.25H18V18h-1.75z" fill="#eee"/></svg><svg class="a" style="left:1190px;top:71px;" width="19" height="19" viewBox="0 0 19 19"><path d="M0 2L8 9L16 2M0 16L8 9L16 16" fill="none" stroke="#5cc08a" stroke-width="1.6"/><path d="M4 9H12" stroke="#ddd" stroke-width="1.5"/><path d="M6 5L10 5" stroke="#ddd"/></svg><svg class="a" style="left:1214px;top:71px;" width="19" height="19" viewBox="0 0 19 19"><path d="M2 16L16 2M2 2L9 9" stroke="#ddd" stroke-width="1.6"/><path d="M1 5A6 6 0 0 1 12 12" fill="none" stroke="#5cc08a" stroke-width="1.2"/></svg><svg class="a" style="left:1268px;top:70px;" width="9" height="24" viewBox="0 0 9 24"><path d="M1 5L4.5 1L8 5Z" fill="#ccc"/><circle cx="4.5" cy="12" r="3" fill="#888"/><path d="M1 19L4.5 23L8 19Z" fill="#ccc"/></svg>
<div class="a" style="left:0px;top:101px;width:30px;height:599px;background:#444;"></div><div class="a" style="left:29px;top:101px;width:3px;height:599px;background:#373737;"></div><div class="a" style="left:2px;top:102px;width:26px;height:1px;background:#555;"></div><svg class="a" style="left:9px;top:110px;" width="14" height="19" viewBox="0 0 14 19"><path d="M1.5 1L12.5 10.5H7.5L10.5 17L8 18L5 11.5L1.5 15Z" fill="#d0d0d0"/></svg><svg class="a" style="left:5px;top:133px;" width="20" height="19" viewBox="0 0 20 19"><ellipse cx="8" cy="7" rx="6.5" ry="4.5" fill="none" stroke="#48b8c8" stroke-width="1.5" stroke-dasharray="2 1.5" transform="rotate(-20 8 7)"/><path d="M9 5L18 13H14L16 17.5L14 18.5L12 14L9 17Z" fill="#d0d0d0"/></svg><svg class="a" style="left:4px;top:159px;" width="22" height="21" viewBox="0 0 22 21"><ellipse cx="9" cy="13" rx="7.5" ry="5.5" fill="none" stroke="#48b8c8" stroke-width="1.5" stroke-dasharray="2.2 1.6" transform="rotate(25 9 13)"/><path d="M20 2L12 11" stroke="#d8d8d8" stroke-width="2.2"/><path d="M12 10Q8 10 8 14Q8 16 7 17Q12 17 13.5 13Z" fill="#d8d8d8"/></svg><div class="a" style="left:3px;top:181px;width:24px;height:24px;background:#5285a6;"></div><svg class="a" style="left:5px;top:183px;" width="20" height="20" viewBox="0 0 20 20"><rect x="6" y="6" width="8" height="8" fill="#ddd"/><path d="M10 0.5L13 3.5H7ZM10 19.5L13 16.5H7ZM0.5 10L3.5 7V13ZM19.5 10L16.5 7V13Z" fill="none" stroke="#9fd8e8" stroke-width="0.9"/></svg><svg class="a" style="left:5px;top:209px;" width="20" height="21" viewBox="0 0 20 21"><path d="M10 4L16 10L10 16L4 10Z" fill="#ddd"/><path d="M16 17A8.5 8.5 0 1 1 18.5 10" fill="none" stroke="#48b8c8" stroke-width="1.3"/><path d="M17 16L18.5 19L15 18.5" fill="#48b8c8"/></svg><svg class="a" style="left:5px;top:233px;" width="20" height="20" viewBox="0 0 20 20"><rect x="5.5" y="1.5" width="13" height="13" fill="none" stroke="#48b8c8" stroke-width="1.3" stroke-dasharray="2 1.5"/><rect x="2" y="11" width="7" height="7" fill="#ddd"/><path d="M8 9H12V13" fill="none" stroke="#48b8c8"/></svg><div class="a" style="left:3px;top:307px;width:24px;height:2px;background:#5b5b5b;"></div><div class="a" style="left:5px;top:315px;width:19px;height:18px;background:#b8b8b8;"></div><div class="a" style="left:7px;top:317px;width:15px;height:14px;background:#555;"></div><svg class="a" style="left:9px;top:319px;" width="11" height="10" viewBox="0 0 11 10"><path d="M5.5 0.5L8 3L5.5 5.5L3 3Z M2.5 3L5 5.5L2.5 8L0 5.5Z M8.5 3L11 5.5L8.5 8L6 5.5Z M5.5 5.5L8 8L5.5 10.5L3 8Z" fill="#ddd"/></svg><div class="a" style="left:5px;top:339px;width:9px;height:9px;background:#bbb;"></div><div class="a" style="left:6px;top:340px;width:7px;height:7px;background:#555;"></div><div class="a" style="left:15px;top:339px;width:9px;height:9px;background:#bbb;"></div><div class="a" style="left:16px;top:340px;width:7px;height:7px;background:#555;"></div><div class="a" style="left:5px;top:349px;width:9px;height:9px;background:#bbb;"></div><div class="a" style="left:6px;top:350px;width:7px;height:7px;background:#555;"></div><div class="a" style="left:15px;top:349px;width:9px;height:9px;background:#bbb;"></div><div class="a" style="left:16px;top:350px;width:7px;height:7px;background:#555;"></div><svg class="a" style="left:6px;top:340px;" width="18" height="18" viewBox="0 0 18 18"><path d="M4.5 2V7M2 4.5H7M4.5 11V16M2 13.5H7M13.5 11V16M11 13.5H16" stroke="#ddd" stroke-width="1.1"/><path d="M13.5 2.5L15.5 4.5L13.5 6.5L11.5 4.5Z" fill="#ddd"/></svg><div class="a" style="left:15px;top:340px;width:8px;height:8px;background:#bbb;"></div><svg class="a" style="left:16px;top:341px;" width="6" height="6" viewBox="0 0 6 6"><path d="M3 0.5L5.5 3L3 5.5L0.5 3Z" fill="#444"/></svg><div class="a" style="left:5px;top:364px;width:9px;height:21px;background:#bbb;"></div><div class="a" style="left:6px;top:365px;width:7px;height:19px;background:#444;"></div><div class="a" style="left:15px;top:364px;width:9px;height:21px;background:#c8c8c8;"></div><svg class="a" style="left:6px;top:371px;" width="17" height="8" viewBox="0 0 17 8"><path d="M3.5 1.5V6.5M1 4H6" stroke="#ccc"/><path d="M13.5 1.5L16 4L13.5 6.5L11 4Z" fill="#333"/></svg><div class="a" style="left:3px;top:385px;width:24px;height:25px;background:#5285a6;border:1px solid #6fa0c0"></div><svg class="a" style="left:6px;top:388px;" width="18" height="19" viewBox="0 0 18 19"><rect x="0.5" y="0.5" width="17" height="18" fill="none" stroke="#9fc8e0" stroke-width="0.6"/><path d="M3 3H13M5 7H14M5 11H14M5 15H14M3 3V15" stroke="#cfe4f0" stroke-width="1"/><circle cx="3" cy="3" r="1.2" fill="#eee"/><circle cx="6" cy="7" r="1.2" fill="#eee"/><circle cx="6" cy="11" r="1.2" fill="#eee"/><circle cx="6" cy="15" r="1.2" fill="#eee"/></svg><div class="a" style="left:3px;top:413px;width:24px;height:2px;background:#5b5b5b;"></div><svg class="a" style="left:6px;top:420px;" width="17" height="18" viewBox="0 0 17 18"><circle cx="6.5" cy="6.5" r="5" fill="none" stroke="#ccc" stroke-width="1.6"/><path d="M10 10L16 16" stroke="#ccc" stroke-width="2"/></svg><svg class="a" style="left:5px;top:673px;" width="20" height="23" viewBox="0 0 20 23"><path d="M3 1.5H19V21.5H3Z" fill="#2b9ccc"/><path d="M0.5 3.5L3 1.5V21.5L0.5 19.5Z" fill="#8fd4ee"/><rect x="3" y="16" width="16" height="5.5" fill="#1e6f98"/><text x="11" y="13" font-size="10" font-weight="bold" fill="#fff" text-anchor="middle" font-family="Liberation Sans">M</text><text x="11" y="20.5" font-size="3.5" fill="#cde" text-anchor="middle" font-family="Liberation Sans">AYA</text></svg>
<div class="a" style="left:32px;top:98px;width:1062px;height:3px;background:#373737;"></div><div class="a" style="left:32px;top:101px;width:1059px;height:302px;background:#444;border:1px solid #5e5e5e;border-bottom:none"></div><div class="t" style="left:38.5px;top:104.4px;font-size:9px;color:#c8c8c8;transform:scaleX(0.86);">View</div><div class="t" style="left:65.5px;top:104.4px;font-size:9px;color:#c8c8c8;transform:scaleX(0.86);">Shading</div><div class="t" style="left:104.0px;top:104.4px;font-size:9px;color:#c8c8c8;transform:scaleX(0.86);">Lighting</div><div class="t" style="left:142.5px;top:104.4px;font-size:9px;color:#c8c8c8;transform:scaleX(0.86);">Show</div><div class="t" style="left:172.0px;top:104.4px;font-size:9px;color:#c8c8c8;transform:scaleX(0.86);">Renderer</div><div class="t" style="left:213.5px;top:104.4px;font-size:9px;color:#c8c8c8;transform:scaleX(0.86);">Panels</div><div class="a" style="left:33px;top:126px;width:1057px;height:1px;background:#3c3c3c;"></div><div class="a" style="left:36px;top:116px;width:1px;height:9px;background:#888;"></div><div class="a" style="left:132px;top:116px;width:1px;height:9px;background:#888;"></div><div class="a" style="left:228px;top:116px;width:1px;height:9px;background:#888;"></div><div class="a" style="left:324px;top:116px;width:1px;height:9px;background:#888;"></div><div class="a" style="left:382px;top:116px;width:1px;height:9px;background:#888;"></div><div class="a" style="left:402px;top:116px;width:1px;height:9px;background:#888;"></div><div class="a" style="left:447px;top:116px;width:1px;height:9px;background:#888;"></div><svg class="a" style="left:42px;top:115px;" width="12" height="11" viewBox="0 0 12 11"><rect x="0" y="3" width="7" height="5" fill="#ddd"/><path d="M7 5.5L11 3V8Z" fill="#ddd"/></svg><svg class="a" style="left:55px;top:115px;" width="12" height="11" viewBox="0 0 12 11"><rect x="0" y="3" width="6" height="6" fill="#48b8c8"/><path d="M6 5L10 3V8Z" fill="#ddd"/><rect x="1" y="0" width="4" height="3" fill="none" stroke="#ddd"/></svg><svg class="a" style="left:66px;top:115px;" width="12" height="11" viewBox="0 0 12 11"><rect x="0" y="3" width="7" height="5" fill="none" stroke="#48b8c8"/><path d="M7 5.5L11 3V8Z" fill="#ddd"/></svg><svg class="a" style="left:83px;top:115px;" width="12" height="11" viewBox="0 0 12 11"><path d="M0.5 1H4V9L2.25 7L0.5 9Z" fill="#ddd"/></svg><svg class="a" style="left:95px;top:115px;" width="12" height="11" viewBox="0 0 12 11"><path d="M1 10L6 2L7 8Z" fill="#48b8c8"/><path d="M3 10L8 1" stroke="#ddd"/></svg><svg class="a" style="left:106px;top:115px;" width="12" height="11" viewBox="0 0 12 11"><path d="M0 5H6M3 2V8" stroke="#ddd"/><circle cx="7" cy="7" r="2.5" fill="none" stroke="#48b8c8"/></svg><svg class="a" style="left:116px;top:114px;" width="14" height="13" viewBox="0 0 14 13"><path d="M3 0.5H0.7V12.3H3M11 0.5H13.3V12.3H11" fill="none" stroke="#4fc46a" stroke-width="1.3"/><path d="M3 10L9 3L10.5 4.5L4.5 11Z" fill="#ddd"/></svg><div class="a" style="left:136px;top:114px;width:13px;height:13px;background:#5285a6;"></div><svg class="a" style="left:138px;top:116px;" width="9" height="9" viewBox="0 0 9 9"><rect x="0.5" y="0.5" width="8" height="8" fill="none" stroke="#eee"/><path d="M3 0.5V8.5M6 0.5V8.5M0.5 3H8.5M0.5 6H8.5" stroke="#eee" stroke-width="0.7"/></svg><svg class="a" style="left:149px;top:116px;" width="11" height="9" viewBox="0 0 11 9"><rect x="0.5" y="0.5" width="10" height="8" fill="none" stroke="#ddd"/><rect x="0.5" y="0.5" width="10" height="2.5" fill="#ddd"/></svg><svg class="a" style="left:163px;top:116px;" width="11" height="9" viewBox="0 0 11 9"><rect x="0.5" y="0.5" width="10" height="8" fill="none" stroke="#ddd"/><circle cx="5.5" cy="4.5" r="2" fill="#ddd"/></svg><svg class="a" style="left:176px;top:116px;" width="11" height="9" viewBox="0 0 11 9"><rect x="0.5" y="0.5" width="10" height="8" fill="#4a4a4a" stroke="#555"/></svg><svg class="a" style="left:191px;top:116px;" width="10" height="9" viewBox="0 0 10 9"><rect x="0.5" y="0.5" width="9" height="8" fill="none" stroke="#ddd"/><path d="M5 1V8M1 4.5H9" stroke="#ddd" stroke-dasharray="1 1"/></svg><svg class="a" style="left:203px;top:116px;" width="11" height="9" viewBox="0 0 11 9"><rect x="0.5" y="0.5" width="10" height="8" fill="none" stroke="#ddd"/><path d="M2 7L5 4L8 7Z" fill="#ddd"/><circle cx="8" cy="3" r="1.2" fill="#4bc"/></svg><svg class="a" style="left:214px;top:116px;" width="11" height="9" viewBox="0 0 11 9"><rect x="0.5" y="0.5" width="10" height="8" fill="none" stroke="#ddd"/><path d="M3 2.5H8M5.5 2.5V7" stroke="#ddd" stroke-width="1.3"/></svg><svg class="a" style="left:234px;top:115px;" width="10" height="11" viewBox="0 0 10 11"><path d="M5 0.5L9.5 3V8L5 10.5L0.5 8V3Z M0.5 3L5 5.5L9.5 3M5 5.5V10.5" fill="none" stroke="#ddd" stroke-width="0.9"/></svg><div class="a" style="left:245px;top:114px;width:13px;height:13px;background:#5285a6;"></div><svg class="a" style="left:246px;top:115px;" width="11" height="11" viewBox="0 0 11 11"><path d="M5.5 0.5L10.5 3V8L5.5 10.5L0.5 8V3Z" fill="#6fd0e8"/><path d="M0.5 3L5.5 5.5L10.5 3M5.5 5.5V10.5" fill="none" stroke="#2a6a80" stroke-width="0.8"/></svg><svg class="a" style="left:261px;top:116px;" width="9" height="9" viewBox="0 0 9 9"><circle cx="4.5" cy="4.5" r="4" fill="#ccc"/><path d="M4.5 0.5A4 4 0 0 1 4.5 8.5Z" fill="#666"/></svg><svg class="a" style="left:272px;top:115px;" width="11" height="11" viewBox="0 0 11 11"><circle cx="5.5" cy="5.5" r="5" fill="none" stroke="#8cc"/><circle cx="5.5" cy="5.5" r="3" fill="#8ab"/></svg><svg class="a" style="left:286px;top:116px;" width="10" height="10" viewBox="0 0 10 10"><circle cx="5" cy="5" r="4.5" fill="#aaa"/><path d="M1 3H9M1 5H9M1 7H9M3 1V9M5 1V9M7 1V9" stroke="#444" stroke-width="0.7"/></svg><svg class="a" style="left:299px;top:115px;" width="9" height="11" viewBox="0 0 9 11"><circle cx="4.5" cy="4" r="2.5" fill="#eee"/><path d="M3.5 7H5.5V10H3.5ZM0 4H1M8 4H9M1 1L2 2M8 1L7 2" stroke="#eee"/></svg><svg class="a" style="left:310px;top:116px;" width="10" height="10" viewBox="0 0 10 10"><circle cx="5" cy="5" r="4.5" fill="#4a5555"/></svg><svg class="a" style="left:331px;top:115px;" width="9" height="11" viewBox="0 0 9 11"><circle cx="4.5" cy="4.5" r="4" fill="#ddd"/><path d="M0 9Q4.5 11 9 9" stroke="#4bc" fill="none"/></svg><svg class="a" style="left:343px;top:115px;" width="10" height="11" viewBox="0 0 10 11"><circle cx="6" cy="4" r="3.5" fill="#ddd"/><circle cx="3" cy="8" r="3" fill="#999"/></svg><div class="a" style="left:354px;top:114px;width:13px;height:13px;background:#5285a6;"></div><svg class="a" style="left:355px;top:115px;" width="11" height="11" viewBox="0 0 11 11"><path d="M5.5 0.5L10.5 5.5L5.5 10.5L0.5 5.5Z" fill="none" stroke="#ddd"/><circle cx="5.5" cy="5.5" r="2.5" fill="none" stroke="#ddd"/></svg><svg class="a" style="left:369px;top:116px;" width="9" height="9" viewBox="0 0 9 9"><rect x="0" y="0" width="9" height="9" fill="#3e4848"/></svg><svg class="a" style="left:389px;top:116px;" width="9" height="9" viewBox="0 0 9 9"><path d="M0 0.5H2M0 3H2M0 5.5H2" stroke="#48b8c8"/><path d="M3 2L8 7H5.5L7 9" fill="#ddd"/></svg><svg class="a" style="left:408px;top:116px;" width="10" height="10" viewBox="0 0 10 10"><rect x="3.5" y="0.5" width="6" height="6" fill="none" stroke="#ddd"/><rect x="0.5" y="3.5" width="6" height="6" fill="#ddd"/></svg><svg class="a" style="left:420px;top:116px;" width="10" height="10" viewBox="0 0 10 10"><rect x="3.5" y="0.5" width="6" height="6" fill="#ddd"/><rect x="0.5" y="3.5" width="6" height="6" fill="#bbb" stroke="#444"/></svg><svg class="a" style="left:433px;top:116px;" width="9" height="9" viewBox="0 0 9 9"><rect x="0.5" y="0.5" width="8" height="8" fill="none" stroke="#ddd"/><path d="M2 2L7 7M2 2H5M2 2V5" stroke="#ddd"/></svg><svg class="a" style="left:455px;top:116px;" width="8" height="8" viewBox="0 0 8 8"><circle cx="4" cy="4" r="3" fill="none" stroke="#ddd" stroke-width="1.5" stroke-dasharray="1.5 1"/></svg><div class="a" style="left:466px;top:115px;width:25px;height:11px;background:#2b2b2b;"></div><div class="t" style="left:469.0px;top:116.9px;font-size:9px;color:#c8c8c8;transform:scaleX(0.86);">0.00</div><svg class="a" style="left:496px;top:116px;" width="7" height="9" viewBox="0 0 7 9"><path d="M3 0.5A4 4 0 0 1 3 8.5Z" fill="#ddd"/><rect x="0" y="3" width="2" height="3" fill="#ddd"/></svg><div class="a" style="left:506px;top:115px;width:26px;height:11px;background:#2b2b2b;"></div><div class="t" style="left:509.0px;top:116.9px;font-size:9px;color:#c8c8c8;transform:scaleX(0.86);">1.00</div><div class="a" style="left:535px;top:114px;width:13px;height:13px;background:#4f7896;"></div><svg class="a" style="left:537px;top:116px;" width="9" height="9" viewBox="0 0 9 9"><circle cx="4.5" cy="4.5" r="4.2" fill="#3aa8c0" stroke="#9de" stroke-width="0.6"/></svg><div class="a" style="left:549px;top:115px;width:131px;height:11px;background:#555;"></div><div class="a" style="left:667px;top:115px;width:13px;height:11px;background:#5b5b5b;"></div><div class="t" style="left:551.0px;top:116.9px;font-size:9px;color:#c8c8c8;transform:scaleX(0.76);">ACES 1.0 SDR-video (sRGB)</div><svg class="a" style="left:670px;top:118px;" width="8" height="5" viewBox="0 0 8 5"><path d="M0 0H8L4 4.5Z" fill="#ddd"/></svg>
<div class="a" style="left:33px;top:127px;width:1057px;height:276px;background:#5d5d5d;"></div><svg class="a" style="left:33px;top:127px" width="1057" height="276" viewBox="33 127 1057 276">
<defs>
<filter id="bl1" x="-30%" y="-30%" width="160%" height="160%"><feGaussianBlur stdDeviation="2.4"/></filter>
<filter id="bl15" x="-30%" y="-30%" width="160%" height="160%"><feGaussianBlur stdDeviation="1.4"/></filter>
<filter id="bl2" x="-30%" y="-30%" width="160%" height="160%"><feGaussianBlur stdDeviation="0.8"/></filter>
<filter id="bl3" x="-50%" y="-50%" width="200%" height="200%"><feGaussianBlur stdDeviation="3.5"/></filter>
<radialGradient id="hg" cx="592" cy="228" r="72" gradientUnits="userSpaceOnUse">
<stop offset="0" stop-color="#a8a8a8"/><stop offset="0.6" stop-color="#9b9b9b"/><stop offset="1" stop-color="#838383"/></radialGradient>
<linearGradient id="bust" x1="482" y1="330" x2="610" y2="390" gradientUnits="userSpaceOnUse"><stop offset="0" stop-color="#8b8b8b"/><stop offset="0.55" stop-color="#959595"/><stop offset="1" stop-color="#8a8a8a"/></linearGradient>
<pattern id="mesh" width="3.6" height="3.2" patternUnits="userSpaceOnUse"><rect width="3.6" height="3.2" fill="#a48ccc"/><circle cx="1.8" cy="1.6" r="1.3" fill="none" stroke="#e4d8f6" stroke-width="0.7"/></pattern>
</defs>
<path d="M444 402L482 352L508 376L545 392L548 402Z" fill="#565656"/>
<path d="M508 374L545 388L548 396L510 384Z" fill="#707070"/>
<path d="M450 402L470 390L500 390L520 402Z" fill="#606060"/>
<!-- bust -->
<path d="M482 352L500 348L530 326L556 305L570 315L585 322L603 323L607 340L609 365Q607 384 592 391Q570 398 545 392L508 376Z" fill="url(#bust)"/>
<path d="M580 324Q588 334 586 352Q582 340 576 330Z" fill="#6a6a6a" filter="url(#bl15)"/>
<path d="M598 330Q604 350 603 372Q597 360 594 340Z" fill="#868686" filter="url(#bl15)"/>
<path d="M540 360Q570 380 600 380Q590 392 560 394Q540 385 540 360Z" fill="#8e8e8e" filter="url(#bl3)"/>
<!-- head -->
<path d="M512 230Q530 195 561 200Q568 189 580 188Q598 190 611 208Q619 225 620 242Q621 248 619 251Q615 257 615 263Q616 270 619 275Q621 279 617 282Q612 284 606 284Q611 288 613 292Q613 296 611 298Q614 301 615 306Q616 313 611 318Q606 321 598 321Q585 322 570 315Q560 308 552 300L520 300Z" fill="url(#hg)"/>
<path d="M575 200Q598 196 610 215Q615 235 605 245Q585 250 575 235Z" fill="#adadad" opacity="0.7" filter="url(#bl3)"/>
<path d="M572 268Q590 262 600 275Q598 292 582 296Q570 288 572 268Z" fill="#a8a8a8" opacity="0.6" filter="url(#bl3)"/>
<path d="M578 257Q590 251 602 256Q592 264 580 262Z" fill="#747474" filter="url(#bl15)"/>
<path d="M606 250Q614 246 620 249Q615 257 608 256Z" fill="#727272" filter="url(#bl2)"/>
<path d="M603 258Q606 270 609 280Q603 284 598 282Q604 272 603 258Z" fill="#777" filter="url(#bl15)"/>
<path d="M604 283Q610 286 616 282Q612 288 605 287Z" fill="#6c6c6c" filter="url(#bl2)"/>
<path d="M595 296Q605 293 615 295Q606 300 596 299Z" fill="#6a6a6a" filter="url(#bl2)"/>
<path d="M600 304Q610 300 614 308Q611 315 604 315Z" fill="#a6a6a6" opacity="0.6" filter="url(#bl1)"/>
<path d="M568 314Q588 324 611 318Q604 326 586 326Q574 322 568 314Z" fill="#626262" filter="url(#bl15)"/>
<path d="M563 205Q568 235 568 262Q565 285 557 300" fill="none" stroke="#7a7a7a" stroke-width="2.2" filter="url(#bl15)"/>
<!-- mesh -->
<path d="M513 200Q535 192 564 205Q569 240 568 262Q566 285 558 302Q546 322 526 338Q510 350 494 352Q488 350 492 342Q504 330 512 318Q518 296 516 270Q510 240 513 200Z" fill="url(#mesh)" opacity="0.92"/>
<path d="M549 229L564 235L562 275L552 290Z" fill="#7a9ae0" opacity="0.45" filter="url(#bl15)"/>
<path d="M517 258Q526 248 540 254Q545 272 538 288Q524 292 517 258Z" fill="#b8a4dc" filter="url(#bl2)"/>
<path d="M524 262Q532 258 537 266Q536 280 530 284Q524 276 524 262Z" fill="#8e80a8" opacity="0.6" filter="url(#bl2)"/>
<!-- flames -->
<g filter="url(#bl15)">
<path d="M503 212Q506 192 520 178Q536 163 556 162Q572 157 586 159Q590 176 580 192Q568 200 560 204Q542 204 528 212Q514 224 510 240Z" fill="#dc9450" opacity="0.85"/>
<path d="M502 208Q512 208 516 232Q519 250 518 262Q511 264 508 248Q503 230 502 208Z" fill="#e0a060" opacity="0.9"/>
<path d="M520 286Q532 284 538 296Q530 318 512 334Q498 348 486 348Q488 334 500 320Q514 304 520 286Z" fill="#e0a468" opacity="0.9"/>
<path d="M486 346Q492 330 505 318Q520 306 532 296Q540 300 534 312Q522 328 508 340Q498 350 490 352Z" fill="#dba060" opacity="0.9"/>
</g>
<g filter="url(#bl1)">
<path d="M509 210Q516 186 540 173Q564 166 576 178Q576 193 556 200Q534 204 513 219Z" fill="#fae4b8"/>
<path d="M520 196Q532 182 548 178Q560 178 562 186Q550 194 530 198Z" fill="#fff4dc"/>
<path d="M538 166Q548 160 560 164Q556 172 546 174Z" fill="#c8803c"/>
<path d="M506 214Q513 214 515 236Q517 252 515 258Q510 254 508 240Q505 226 506 214Z" fill="#f8e6c2"/>
<path d="M489 346Q496 324 512 312Q526 300 536 294Q538 308 530 320Q516 336 504 344Q496 350 490 350Z" fill="#f8e0b4"/>
<path d="M538 214Q552 210 563 214Q560 226 550 229Q540 226 538 214Z" fill="#f4e0b8" opacity="0.95"/>
<path d="M520 234Q528 232 534 240Q532 250 524 250Q519 244 520 234Z" fill="#f0d8b0" opacity="0.9"/>
<path d="M524 262Q536 256 542 270Q540 288 530 296Q522 284 524 262Z" fill="#f2d8aa" opacity="0.9"/>
<path d="M532 240Q546 236 552 246Q548 258 538 258Z" fill="#eed0a0" opacity="0.8"/>
<path d="M515 296Q524 290 530 300Q524 314 514 316Z" fill="#f6e0b8"/>
<path d="M584 158Q592 168 588 188L580 192Q584 175 584 158Z" fill="#e0a878"/>
</g>
<g filter="url(#bl15)" opacity="0.85">
<path d="M520 182Q522 170 530 166Q528 176 532 180Z" fill="#e8a860"/>
<path d="M542 170Q546 160 554 158Q552 168 556 172Z" fill="#e4a058"/>
<path d="M560 166Q566 158 572 160Q568 168 570 174Z" fill="#d8904c"/>
<path d="M508 204Q504 196 508 190Q512 196 514 200Z" fill="#e8b070"/>
<path d="M494 330Q488 322 492 314Q498 322 500 326Z" fill="#e8b880"/>
<path d="M506 318Q502 310 506 302Q512 310 512 316Z" fill="#f0cc98"/>
</g>
<circle cx="602" cy="204" r="1.8" fill="#d88a78" filter="url(#bl2)"/>
<circle cx="615" cy="215" r="1.8" fill="#d88a78" filter="url(#bl2)"/>
</svg><div class="t" style="left:547.0px;top:390.3px;font-size:8px;color:#e8e8e8;font-weight:bold;transform:scaleX(0.95);">persp</div><svg class="a" style="left:47px;top:370px;" width="14" height="17" viewBox="0 0 14 17"><path d="M3.5 2V14" stroke="#3c3" stroke-width="1.2"/><path d="M3.5 14L10 10" stroke="#e33" stroke-width="1.4"/><path d="M3.5 14L9 15" stroke="#33e" stroke-width="1.4"/><text x="1" y="4" font-size="4" fill="#5d5">y</text></svg>
<div class="a" style="left:32px;top:403px;width:1062px;height:4px;background:#373737;"></div><div class="a" style="left:33px;top:402px;width:1058px;height:1px;background:#6c6c6c;"></div><div class="a" style="left:32px;top:407px;width:1059px;height:11px;background:#393939;"></div><div class="a" style="left:33px;top:407px;width:80px;height:11px;background:#444;"></div><div class="t" style="left:38.5px;top:409.4px;font-size:9px;color:#d0d0d0;transform:scaleX(0.86);">Bifrost Graph Editor</div><div class="a" style="left:32px;top:418px;width:1059px;height:13px;background:#444;"></div><div class="t" style="left:38.0px;top:421.9px;font-size:9px;color:#c8c8c8;transform:scaleX(0.86);">Create</div><div class="t" style="left:70.0px;top:421.9px;font-size:9px;color:#c8c8c8;transform:scaleX(0.86);">Edit</div><div class="t" style="left:93.0px;top:421.9px;font-size:9px;color:#c8c8c8;transform:scaleX(0.86);">Display</div><div class="t" style="left:128.0px;top:421.9px;font-size:9px;color:#c8c8c8;transform:scaleX(0.86);">Options</div><div class="t" style="left:166.0px;top:421.9px;font-size:9px;color:#c8c8c8;transform:scaleX(0.86);">Windows</div><div class="t" style="left:208.0px;top:421.9px;font-size:9px;color:#c8c8c8;transform:scaleX(0.86);">Help</div><div class="a" style="left:32px;top:431px;width:856px;height:13px;background:#363636;"></div><div class="a" style="left:33px;top:432px;width:94px;height:12px;background:#454545;"></div><div class="t" style="left:40.0px;top:434.9px;font-size:9px;color:#d8d8d8;transform:scaleX(0.86);">bifrostGraphShape1</div><svg class="a" style="left:114px;top:435px;" width="7" height="7" viewBox="0 0 7 7"><path d="M0.5 0.5L6.5 6.5M6.5 0.5L0.5 6.5" stroke="#ccc" stroke-width="1.1"/></svg><div class="a" style="left:130px;top:432px;width:21px;height:12px;background:#3a3a3a;"></div><svg class="a" style="left:137px;top:435px;" width="6" height="6" viewBox="0 0 6 6"><path d="M3 0V6M0 3H6" stroke="#bbb"/></svg><div class="a" style="left:32px;top:444px;width:856px;height:14px;background:#454545;"></div><svg class="a" style="left:36px;top:446px;" width="8" height="10" viewBox="0 0 8 10"><path d="M6.5 1L2 5L6.5 9" fill="none" stroke="#ddd" stroke-width="1.5"/></svg><svg class="a" style="left:50px;top:446px;" width="8" height="10" viewBox="0 0 8 10"><path d="M1.5 1L6 5L1.5 9" fill="none" stroke="#ddd" stroke-width="1.5"/></svg><div class="a" style="left:66px;top:444px;width:6px;height:14px;background:#363636;"></div><div class="a" style="left:73px;top:445px;width:76px;height:13px;background:#5b90bf;"></div><div class="t" style="left:76.0px;top:447.4px;font-size:9px;color:#1b2733;transform:scaleX(0.86);">bifrostGraphShape1</div><svg class="a" style="left:151px;top:447px;" width="5" height="8" viewBox="0 0 5 8"><path d="M0.5 0.5L4.5 4L0.5 7.5Z" fill="#ddd"/></svg><div class="a" style="left:158px;top:445px;width:45px;height:13px;background:#535353;"></div><div class="t" style="left:161.0px;top:447.4px;font-size:9px;color:#e0e0e0;transform:scaleX(0.78);">MG_IGNITE</div>
<div class="a" style="left:32px;top:458px;width:856px;height:242px;background:#393939;"></div><div class="a" style="left:34px;top:459px;width:853px;height:236px;background-color:#1e2330;background-image:radial-gradient(circle, #3a404a 0.6px, transparent 0.9px);background-size:10.6px 10.6px;background-position:3px 4px;overflow:hidden"><svg class="a" style="left:0;top:0" width="853" height="236" viewBox="34 459 853 236">
<g fill="none" stroke-linecap="round">
<path d="M178 532C300 532 520 480 738 480" stroke="#8088cc" stroke-width="1.3"/>
<path d="M178 533C300 538 400 567 489 567" stroke="#8088cc" stroke-width="1.3"/>
<path d="M565 543C625 543 660 504 738 504" stroke="#8088cc" stroke-width="1.3"/>
<path d="M178 533C186 560 188 600 193 670" stroke="#8088cc" stroke-width="1.3"/>
<path d="M182 540C160 590 120 640 103 695" stroke="#8088cc" stroke-width="1.2"/>
<path d="M34 525C60 530 80 545 105 549" stroke="#8088cc" stroke-width="1.2"/>
<path d="M58 549C80 549 90 541 105 541" stroke="#c8b48a" stroke-width="1.1"/>
<path d="M105 558C60 565 45 620 34 668" stroke="#a8c080" stroke-width="1.1"/>
<path d="M489 567H497" stroke="#8088cc" stroke-width="1.3"/>
</g></svg></div>
<div class="a" style="left:0;top:0;width:1280px;height:720px;clip-path:inset(459px 393px 25px 34px)"><div class="a" style="left:34px;top:534px;width:17px;height:70px;background:#3a424d;"></div><div class="a" style="left:34px;top:534px;width:17px;height:1.5px;background:#c8a878;"></div><div class="t" style="left:34.0px;top:528.6px;font-size:6px;color:#dde0e6;transform:scaleX(0.8);">ons</div><div class="a" style="left:47px;top:537px;width:1px;height:4px;background:#aaa;"></div><div class="t" style="left:34.0px;top:546.6px;font-size:6px;color:#dde0e6;transform:scaleX(0.8);clip-path:inset(0 0 0 0)">ations</div><div class="t" style="left:34.0px;top:554.6px;font-size:6px;color:#dde0e6;transform:scaleX(0.8);">found</div><div class="a" style="left:52px;top:546.0px;width:5px;height:6px;background:#d8b88a;"></div><div class="a" style="left:52px;top:554.0px;width:5px;height:6px;background:#e0955a;"></div><div class="a" style="left:58px;top:546px;width:1px;height:6px;background:#d8b88a;"></div><div class="a" style="left:58px;top:554px;width:1px;height:6px;background:#e0955a;"></div><div class="t" style="left:107.0px;top:509.4px;font-size:6.5px;color:#dde0e6;transform:scaleX(0.9);">• location_scope</div><div class="a" style="left:109px;top:517px;width:62px;height:68px;background:#3a424d;"></div><div class="a" style="left:109px;top:517px;width:62px;height:1.5px;background:#c8a878;"></div><svg class="a" style="left:113px;top:521px;" width="4" height="3" viewBox="0 0 4 3"><path d="M0 0H4L2 3Z" fill="#bbb"/></svg><div class="a" style="left:166px;top:520px;width:1px;height:5px;background:#bbb;"></div><div class="t" style="right:1112.0px;top:529.6px;font-size:6px;color:#dde0e6;transform:scaleX(0.8);transform-origin:100% 0;">diagnostic_geo</div><div class="a" style="left:172px;top:528.5px;width:5px;height:7px;background:#8a90e8;"></div><div class="a" style="left:178px;top:529px;width:1px;height:7px;background:#8a90e8;"></div><div class="t" style="left:113.0px;top:538.6px;font-size:6px;color:#dde0e6;transform:scaleX(0.8);">locations</div><div class="a" style="left:104px;top:538.0px;width:5px;height:6px;background:#d8b88a;"></div><div class="t" style="left:113.0px;top:546.6px;font-size:6px;color:#dde0e6;transform:scaleX(0.8);">geometry</div><div class="a" style="left:104px;top:546.0px;width:5px;height:6px;background:#8a90e8;"></div><div class="t" style="left:113.0px;top:555.6px;font-size:6px;color:#dde0e6;transform:scaleX(0.8);">positions</div><div class="a" style="left:104px;top:555.0px;width:5px;height:6px;background:#8fd060;"></div><div class="t" style="left:113.0px;top:563.6px;font-size:6px;color:#dde0e6;transform:scaleX(0.8);">raycast_directions</div><div class="a" style="left:104px;top:563.0px;width:5px;height:6px;background:#8fd060;"></div><div class="a" style="left:101px;top:538px;width:1px;height:6px;background:#d8b88a;"></div><div class="t" style="left:113.0px;top:571.6px;font-size:6px;color:#dde0e6;transform:scaleX(0.8);">+ diagnostic_modes</div><svg class="a" style="left:128px;top:579px;" width="24" height="24" viewBox="0 0 24 24"><circle cx="12" cy="12" r="10.5" fill="#1f232a" stroke="#c8a878" stroke-width="1.4"/><path d="M5 14L8 11L11 15L14 10L17 12" fill="none" stroke="#ccc" stroke-width="0.9"/><path d="M15.5 4A2.5 2.5 0 0 1 18 6.5Q18 8 15.5 11Q13 8 13 6.5A2.5 2.5 0 0 1 15.5 4Z" fill="#ddd"/></svg><div class="t" style="left:493.0px;top:519.4px;font-size:6.5px;color:#dde0e6;transform:scaleX(0.9);">* MG_IGNITE</div><div class="a" style="left:497px;top:527px;width:62px;height:170px;background:#3a424d;border:1px solid #dcdcdc;border-bottom:none"></div><svg class="a" style="left:501px;top:531px;" width="4" height="3" viewBox="0 0 4 3"><path d="M0 0H4L2 3Z" fill="#bbb"/></svg><div class="a" style="left:553px;top:530px;width:1px;height:5px;background:#bbb;"></div><div class="t" style="right:726.0px;top:540.6px;font-size:6px;color:#dde0e6;transform:scaleX(0.8);transform-origin:100% 0;">out_geometry</div><div class="t" style="right:726.0px;top:548.6px;font-size:6px;color:#dde0e6;transform:scaleX(0.8);transform-origin:100% 0;">solver_inputs</div><div class="a" style="left:560px;top:540.0px;width:5px;height:6px;background:#8a90e8;"></div><div class="a" style="left:560px;top:548.0px;width:5px;height:6px;background:#8a90e8;"></div><div class="a" style="left:567px;top:548px;width:1px;height:6px;background:#8a90e8;"></div><div class="a" style="left:491px;top:555.5px;width:5px;height:5px;background:#8a90e8;"></div><div class="a" style="left:491px;top:563.5px;width:5px;height:7px;background:#8a90e8;"></div><div class="a" style="left:488px;top:563px;width:1px;height:7px;background:#8a90e8;"></div><div class="t" style="left:502.0px;top:556.6px;font-size:6px;color:#dde0e6;transform:scaleX(0.8);">− Source</div><div class="t" style="left:509.0px;top:564.6px;font-size:6px;color:#dde0e6;transform:scaleX(0.8);">diagnostic_geo</div><div class="t" style="left:502.0px;top:573.6px;font-size:6px;color:#dde0e6;transform:scaleX(0.8);">− Source Attributes</div><div class="a" style="left:505px;top:579px;width:1px;height:118px;background:#5a636e;"></div><div class="t" style="left:509.0px;top:582.1px;font-size:6px;color:#dde0e6;transform:scaleX(0.8);">start_frame</div><div class="a" style="left:491px;top:581.5px;width:5px;height:6px;background:#6fcf8f;"></div><div class="t" style="left:509.0px;top:590.6px;font-size:6px;color:#dde0e6;transform:scaleX(0.8);">use_end_frame</div><div class="a" style="left:491px;top:589.96px;width:5px;height:6px;background:#e0905a;"></div><div class="t" style="left:509.0px;top:599.0px;font-size:6px;color:#dde0e6;transform:scaleX(0.8);">end_frame</div><div class="a" style="left:491px;top:598.42px;width:5px;height:6px;background:#6fcf8f;"></div><div class="t" style="left:509.0px;top:607.5px;font-size:6px;color:#dde0e6;transform:scaleX(0.8);">resolution_mode</div><div class="a" style="left:491px;top:606.88px;width:5px;height:6px;background:#e0905a;"></div><div class="t" style="left:509.0px;top:615.9px;font-size:6px;color:#dde0e6;transform:scaleX(0.8);">geo_volume_offset</div><div class="a" style="left:491px;top:615.34px;width:5px;height:6px;background:#6fcf8f;"></div><div class="t" style="left:509.0px;top:624.4px;font-size:6px;color:#dde0e6;transform:scaleX(0.8);">min_hole_radius</div><div class="a" style="left:491px;top:623.8px;width:5px;height:6px;background:#6fcf8f;"></div><div class="t" style="left:509.0px;top:632.9px;font-size:6px;color:#dde0e6;transform:scaleX(0.8);">fluid_detail_size</div><div class="a" style="left:491px;top:632.26px;width:5px;height:6px;background:#6fcf8f;"></div><div class="t" style="left:509.0px;top:641.3px;font-size:6px;color:#dde0e6;transform:scaleX(0.8);">fog_density</div><div class="a" style="left:491px;top:640.72px;width:5px;height:6px;background:#6fcf8f;"></div><div class="a" style="left:488px;top:640.72px;width:1px;height:6px;background:#8fd060;"></div><div class="t" style="left:509.0px;top:649.8px;font-size:6px;color:#dde0e6;transform:scaleX(0.8);">temperature</div><div class="a" style="left:491px;top:649.1800000000001px;width:5px;height:6px;background:#6fcf8f;"></div><div class="a" style="left:488px;top:649.1800000000001px;width:1px;height:6px;background:#8fd060;"></div><div class="t" style="left:509.0px;top:658.2px;font-size:6px;color:#dde0e6;transform:scaleX(0.8);">initial_speed</div><div class="a" style="left:491px;top:657.64px;width:5px;height:6px;background:#6fcf8f;"></div><div class="a" style="left:488px;top:657.64px;width:1px;height:6px;background:#8fd060;"></div><div class="t" style="left:509.0px;top:666.7px;font-size:6px;color:#dde0e6;transform:scaleX(0.8);">initial_speed_direction</div><div class="a" style="left:491px;top:666.1px;width:5px;height:6px;background:#a8d870;"></div><div class="a" style="left:488px;top:666.1px;width:1px;height:6px;background:#8fd060;"></div><div class="t" style="left:509.0px;top:675.2px;font-size:6px;color:#dde0e6;transform:scaleX(0.8);">inherit_velocity</div><div class="a" style="left:491px;top:674.56px;width:5px;height:6px;background:#6fcf8f;"></div><div class="a" style="left:488px;top:674.56px;width:1px;height:6px;background:#8fd060;"></div><div class="t" style="left:509.0px;top:683.6px;font-size:6px;color:#dde0e6;transform:scaleX(0.8);">trail_smoothness</div><div class="a" style="left:491px;top:683.02px;width:5px;height:6px;background:#4ac0d0;"></div><div class="t" style="left:509.0px;top:692.1px;font-size:6px;color:#dde0e6;transform:scaleX(0.8);">fog_density_mode</div><div class="a" style="left:491px;top:691.48px;width:5px;height:6px;background:#e0905a;"></div><div class="t" style="left:745.0px;top:455.9px;font-size:6.5px;color:#dde0e6;transform:scaleX(0.9);">output</div><div class="a" style="left:744px;top:464px;width:61px;height:60px;background:#3a424d;"></div><div class="a" style="left:744px;top:464px;width:61px;height:2px;background:#5fc07a;"></div><svg class="a" style="left:749px;top:469px;" width="4" height="3" viewBox="0 0 4 3"><path d="M0 0H4L2 3Z" fill="#bbb"/></svg><div class="a" style="left:799px;top:468px;width:1px;height:5px;background:#bbb;"></div><div class="t" style="left:748.0px;top:477.1px;font-size:6px;color:#dde0e6;transform:scaleX(0.8);">diagnostic_geo</div><div class="a" style="left:738px;top:476.5px;width:5px;height:6px;background:#8a90e8;"></div><div class="t" style="left:748.0px;top:485.1px;font-size:6px;color:#dde0e6;transform:scaleX(0.8);">volume</div><div class="a" style="left:738px;top:484.5px;width:5px;height:6px;background:#8a90e8;"></div><div class="t" style="left:748.0px;top:493.6px;font-size:6px;color:#dde0e6;transform:scaleX(0.8);">particles</div><div class="a" style="left:738px;top:493.0px;width:5px;height:6px;background:#8a90e8;"></div><div class="t" style="left:748.0px;top:501.6px;font-size:6px;color:#dde0e6;transform:scaleX(0.8);">out_geometry</div><div class="a" style="left:738px;top:501.0px;width:5px;height:6px;background:#8a90e8;"></div><svg class="a" style="left:737px;top:509px;" width="6" height="6" viewBox="0 0 6 6"><rect x="0.5" y="0.5" width="5" height="5" fill="none" stroke="#ddd"/><path d="M3 1.5V4.5M1.5 3H4.5" stroke="#ddd"/></svg><svg class="a" style="left:762px;top:518px;" width="25" height="25" viewBox="0 0 25 25"><circle cx="12.5" cy="12.5" r="11" fill="#1f232a" stroke="#5fc07a" stroke-width="1.5"/><path d="M12 7A5.5 5.5 0 0 0 12 18" fill="none" stroke="#8a90c8" stroke-width="1"/><path d="M10 12.5H15M13.5 10L16 12.5L13.5 15" fill="none" stroke="#eee" stroke-width="1.6"/></svg><div class="t" style="left:113.0px;top:667.4px;font-size:6.5px;color:#dde0e6;transform:scaleX(0.9);">• get_point_position1</div><div class="a" style="left:113px;top:674px;width:62px;height:23px;background:#3a424d;"></div><div class="a" style="left:113px;top:674px;width:62px;height:1.5px;background:#c8a878;"></div><div class="t" style="left:178.0px;top:666.4px;font-size:6.5px;color:#dde0e6;transform:scaleX(0.9);">• points_to_volume</div><div class="a" style="left:181px;top:674px;width:62px;height:23px;background:#3a424d;"></div><div class="a" style="left:181px;top:674px;width:62px;height:1.5px;background:#c8a878;"></div><div class="t" style="left:139.0px;top:687.6px;font-size:6px;color:#dde0e6;transform:scaleX(0.8);">point_pos</div><div class="t" style="left:222.0px;top:687.6px;font-size:6px;color:#dde0e6;transform:scaleX(0.8);">volume</div><div class="a" style="left:244px;top:686.5px;width:5px;height:7px;background:#8a90e8;"></div><div class="t" style="left:158.0px;top:680.4px;font-size:6.5px;color:#dde0e6;transform:scaleX(0.9);">• construct_points</div><div class="a" style="left:162px;top:688px;width:62px;height:9px;background:#3a424d;"></div><div class="a" style="left:162px;top:688px;width:62px;height:1.5px;background:#c8a878;"></div></div>
<div class="a" style="left:888px;top:432px;width:206px;height:268px;background:#373737;"></div><div class="a" style="left:892px;top:432px;width:200px;height:12px;background:#3a3a3a;"></div><div class="a" style="left:892px;top:432px;width:52px;height:12px;background:#444;"></div><div class="t" style="left:899.5px;top:434.4px;font-size:9px;color:#e0e0e0;transform:scaleX(0.86);">Parameters</div><div class="a" style="left:945px;top:433px;width:28px;height:11px;background:#3d3d3d;"></div><div class="t" style="left:952.0px;top:434.4px;font-size:9px;color:#8a8a8a;transform:scaleX(0.86);">Info</div><div class="a" style="left:892px;top:444px;width:200px;height:256px;background:#444;"></div><div class="a" style="left:894px;top:447px;width:68px;height:6px;background:repeating-linear-gradient(90deg,#555 0 1px,transparent 1px 2px)"></div><div class="t" style="left:966.0px;top:447.5px;font-size:7.5px;color:#b0b0b0;transform:scaleX(0.9);">Parameters</div><div class="a" style="left:1002px;top:448px;width:66px;height:5px;background:#4c4c4c;"></div><div class="a" style="left:1072px;top:445px;width:9px;height:10px;background:#3c3c3c;"></div><svg class="a" style="left:1073px;top:446px;" width="8" height="8" viewBox="0 0 8 8"><rect x="0.5" y="2.5" width="5" height="5" fill="none" stroke="#ccc" stroke-width="0.8"/><path d="M2.5 2.5V0.5H7.5V5.5H5.5" fill="none" stroke="#ccc" stroke-width="0.8"/></svg><div class="a" style="left:1082px;top:445px;width:9px;height:10px;background:#3c3c3c;"></div><svg class="a" style="left:1083px;top:446px;" width="8" height="8" viewBox="0 0 8 8"><path d="M1 1L7 7M7 1L1 7" stroke="#ddd" stroke-width="1.1"/></svg><svg class="a" style="left:1028px;top:465px;" width="9" height="9" viewBox="0 0 9 9"><path d="M1 8L8 1" stroke="#5c5c5c" stroke-width="2"/></svg><svg class="a" style="left:1048px;top:464px;" width="10" height="10" viewBox="0 0 10 10"><path d="M6 0.5L9.5 4L8 4.5L6 7L6.5 8.5L1.5 3.5L3 4L5.5 2L6 0.5Z" fill="#ddd"/><path d="M3.5 6.5L0.5 9.5" stroke="#ddd"/></svg><svg class="a" style="left:1068px;top:465px;" width="12" height="9" viewBox="0 0 12 9"><path d="M0 1H12M0 4.5H12M0 8H12" stroke="#ddd" stroke-width="1.2"/></svg><svg class="a" style="left:896px;top:476px;" width="38" height="38" viewBox="0 0 38 38"><circle cx="19" cy="19.5" r="18.5" fill="#2c2c2c"/><rect x="8" y="9" width="23" height="22" rx="2" fill="#d4d4d4"/><rect x="10.5" y="11.5" width="13" height="5" rx="1" fill="#7a9ad8" stroke="#3a4a6a" stroke-width="0.7"/><rect x="16" y="23" width="13" height="5" rx="1" fill="#7a9ad8" stroke="#3a4a6a" stroke-width="0.7"/><path d="M23.5 14H27V20H14V25.5H16" fill="none" stroke="#555" stroke-width="0.8"/></svg><div class="t" style="left:940.0px;top:484.1px;font-size:11px;color:#e4e4e4;font-weight:bold;transform:scaleX(0.8);">MG_IGNITE</div><div class="t" style="left:940.0px;top:501.7px;font-size:9.5px;color:#d4d4d4;font-weight:bold;transform:scaleX(0.8);">Type: MG_IGNITE</div><div class="a" style="left:893px;top:514px;width:198px;height:1px;background:#4a4a4a;"></div><div class="a" style="left:892px;top:523px;width:186px;height:16px;background:#515151;"></div><div class="t" style="left:902.0px;top:527.9px;font-size:9px;color:#d8d8d8;transform:scaleX(0.86);">Source Attributes</div><div class="a" style="left:1067px;top:531px;width:7px;height:1.5px;background:#ddd;"></div><div class="a" style="left:1082px;top:522px;width:9px;height:174px;background:#3b3b3b;"></div><svg class="a" style="left:1083px;top:523px;" width="7" height="5" viewBox="0 0 7 5"><path d="M0.5 4.5L3.5 0.5L6.5 4.5Z" fill="#ccc"/></svg><div class="a" style="left:1084px;top:530px;width:5px;height:20px;background:#5c5c5c;border-radius:2px"></div><svg class="a" style="left:1083px;top:690px;" width="7" height="5" viewBox="0 0 7 5"><path d="M0.5 0.5L3.5 4.5L6.5 0.5Z" fill="#ccc"/></svg><div class="t" style="left:912.0px;top:546.4px;font-size:9px;color:#c8c8c8;transform:scaleX(0.86);">Start Frame</div><div class="a" style="left:998px;top:544.0px;width:80px;height:12.5px;background:#2b2b2b;"></div><div class="t" style="left:1002.0px;top:546.4px;font-size:9px;color:#d0d0d0;transform:scaleX(0.86);">1</div><div class="t" style="left:912.0px;top:567.9px;font-size:9px;color:#c8c8c8;transform:scaleX(0.86);">Use End Frame</div><div class="a" style="left:997px;top:566.45px;width:9px;height:9px;background:#2b2b2b;border:1px solid #3a3a3a"></div><div class="t" style="left:912.0px;top:589.3px;font-size:9px;color:#c8c8c8;transform:scaleX(0.86);">End Frame</div><div class="a" style="left:998px;top:586.9px;width:80px;height:12.5px;background:#2b2b2b;"></div><div class="t" style="left:1002.0px;top:589.3px;font-size:9px;color:#d0d0d0;transform:scaleX(0.86);">5</div><div class="t" style="left:912.0px;top:610.8px;font-size:9px;color:#c8c8c8;transform:scaleX(0.86);">Resolution Mode</div><div class="a" style="left:998px;top:608.35px;width:80px;height:12.5px;background:#555;"></div><div class="a" style="left:1065px;top:608.35px;width:13px;height:12.5px;background:#5c5c5c;"></div><div class="t" style="left:1002.0px;top:610.8px;font-size:9px;color:#d0d0d0;transform:scaleX(0.86);">Relative</div><svg class="a" style="left:1068px;top:612.35px;" width="8" height="5" viewBox="0 0 8 5"><path d="M0 0H8L4 4.5Z" fill="#ddd"/></svg><div class="t" style="left:912.0px;top:632.2px;font-size:9px;color:#c8c8c8;transform:scaleX(0.86);">Geo Volume Offset</div><div class="a" style="left:998px;top:629.8px;width:80px;height:12.5px;background:#2b2b2b;"></div><div class="t" style="left:1002.0px;top:632.2px;font-size:9px;color:#d0d0d0;transform:scaleX(0.86);">0</div><div class="t" style="left:912.0px;top:653.6px;font-size:9px;color:#c8c8c8;transform:scaleX(0.86);">Min Hole Radius</div><div class="a" style="left:998px;top:651.25px;width:80px;height:12.5px;background:#2b2b2b;"></div><div class="t" style="left:1002.0px;top:653.6px;font-size:9px;color:#d0d0d0;transform:scaleX(0.86);">0</div><div class="t" style="left:912.0px;top:675.1px;font-size:9px;color:#c8c8c8;transform:scaleX(0.86);">Fluid Detail Size</div><div class="a" style="left:998px;top:672.7px;width:80px;height:12.5px;background:#2b2b2b;"></div><div class="t" style="left:1002.0px;top:675.1px;font-size:9px;color:#d0d0d0;transform:scaleX(0.86);">0.01</div><div class="t" style="left:912.0px;top:696.5px;font-size:9px;color:#c8c8c8;transform:scaleX(0.86);">Fog Density</div><div class="a" style="left:998px;top:694.15px;width:80px;height:12.5px;background:#2b2b2b;"></div><div class="t" style="left:1002.0px;top:696.5px;font-size:9px;color:#d0d0d0;transform:scaleX(0.86);">0</div><div class="a" style="left:888px;top:696px;width:206px;height:4px;background:#373737;"></div><div class="a" style="left:892px;top:696px;width:186px;height:2px;background:#444;"></div>
<div class="a" style="left:1091px;top:98px;width:3px;height:602px;background:#373737;"></div><div class="a" style="left:1094px;top:98px;width:186px;height:602px;background:#444;"></div><div class="a" style="left:1094px;top:100px;width:186px;height:13px;background:#3a3a3a;"></div><div class="a" style="left:1096px;top:101px;width:101px;height:12px;background:#444;"></div><div class="t" style="left:1101.5px;top:102.9px;font-size:9px;color:#d0d0d0;transform:scaleX(0.86);">Channel Box / Layer Editor</div><div class="a" style="left:1199px;top:101px;width:68px;height:11px;background:#3d3d3d;border:1px solid #363636;border-bottom:none"></div><div class="t" style="left:1207.0px;top:102.9px;font-size:9px;color:#c8c8c8;transform:scaleX(0.86);">Attribute Editor</div><svg class="a" style="left:1237px;top:112px;" width="12" height="13" viewBox="0 0 12 13"><path d="M6 7V3M6 7L2.5 10M6 7L9.5 10" stroke="#ddd" stroke-width="0.9"/><path d="M6 0.5L8.5 4H3.5Z" fill="#8ac060"/><rect x="0.5" y="8.5" width="3.5" height="3.5" fill="#4a70c8"/><rect x="8" y="8.5" width="3.5" height="3.5" fill="#c84848"/></svg><svg class="a" style="left:1252px;top:113px;" width="11" height="10" viewBox="0 0 11 10"><path d="M2 8.5A4 4 0 1 1 9.5 5" fill="none" stroke="#3fb0c0" stroke-width="2.4"/><path d="M7.5 6L9.5 9L11 5.5Z" fill="#3fb0c0"/></svg><svg class="a" style="left:1266px;top:113px;" width="10" height="10" viewBox="0 0 10 10"><path d="M1.5 8.5L8.5 1.5M5.5 1.5H8.5V4.5" fill="none" stroke="#7cc8d8" stroke-width="1.1"/><path d="M1 1.5V9H9" fill="none" stroke="#6a8a90" stroke-width="0.8"/></svg><div class="t" style="left:1102.0px;top:128.9px;font-size:9px;color:#c8c8c8;transform:scaleX(0.86);">Channels</div><div class="t" style="left:1144.0px;top:128.9px;font-size:9px;color:#c8c8c8;transform:scaleX(0.86);">Edit</div><div class="t" style="left:1168.0px;top:128.9px;font-size:9px;color:#c8c8c8;transform:scaleX(0.86);">Object</div><div class="t" style="left:1200.0px;top:128.9px;font-size:9px;color:#c8c8c8;transform:scaleX(0.86);">Show</div><div class="t" style="left:1100.0px;top:144.8px;font-size:8px;color:#e0e0e0;font-weight:bold;transform:scaleX(0.86);">emit</div><div class="a" style="left:1100px;top:153px;width:125px;height:10px;background:#5285a6;"></div><div class="a" style="left:1226px;top:153px;width:49px;height:10px;background:#2f2f2f;"></div><div class="t" style="right:58.0px;top:154.6px;font-size:8.5px;color:#e8e8e8;transform:scaleX(0.86);transform-origin:100% 0;">Translate X</div><div class="t" style="left:1231.0px;top:154.6px;font-size:8.5px;color:#d8d8d8;transform:scaleX(0.86);">-0.71</div><div class="a" style="left:1100px;top:164px;width:125px;height:9px;background:#5285a6;"></div><div class="a" style="left:1226px;top:164px;width:49px;height:9px;background:#2f2f2f;"></div><div class="t" style="right:58.0px;top:165.2px;font-size:8.5px;color:#e8e8e8;transform:scaleX(0.86);transform-origin:100% 0;">Translate Y</div><div class="t" style="left:1231.0px;top:165.2px;font-size:8.5px;color:#d8d8d8;transform:scaleX(0.86);">3.426</div><div class="a" style="left:1100px;top:174px;width:125px;height:10px;background:#5285a6;"></div><div class="a" style="left:1226px;top:174px;width:49px;height:10px;background:#2f2f2f;"></div><div class="t" style="right:58.0px;top:175.8px;font-size:8.5px;color:#e8e8e8;transform:scaleX(0.86);transform-origin:100% 0;">Translate Z</div><div class="t" style="left:1231.0px;top:175.8px;font-size:8.5px;color:#d8d8d8;transform:scaleX(0.86);">-0.809</div><div class="a" style="left:1100px;top:185px;width:125px;height:9px;background:#5285a6;"></div><div class="a" style="left:1226px;top:185px;width:49px;height:9px;background:#2f2f2f;"></div><div class="t" style="right:58.0px;top:186.4px;font-size:8.5px;color:#e8e8e8;transform:scaleX(0.86);transform-origin:100% 0;">Rotate X</div><div class="t" style="left:1231.0px;top:186.4px;font-size:8.5px;color:#d8d8d8;transform:scaleX(0.86);">0</div><div class="a" style="left:1100px;top:195px;width:125px;height:10px;background:#5285a6;"></div><div class="a" style="left:1226px;top:195px;width:49px;height:10px;background:#2f2f2f;"></div><div class="t" style="right:58.0px;top:197.0px;font-size:8.5px;color:#e8e8e8;transform:scaleX(0.86);transform-origin:100% 0;">Rotate Y</div><div class="t" style="left:1231.0px;top:197.0px;font-size:8.5px;color:#d8d8d8;transform:scaleX(0.86);">0</div><div class="a" style="left:1100px;top:206px;width:125px;height:10px;background:#5285a6;"></div><div class="a" style="left:1226px;top:206px;width:49px;height:10px;background:#2f2f2f;"></div><div class="t" style="right:58.0px;top:207.6px;font-size:8.5px;color:#e8e8e8;transform:scaleX(0.86);transform-origin:100% 0;">Rotate Z</div><div class="t" style="left:1231.0px;top:207.6px;font-size:8.5px;color:#d8d8d8;transform:scaleX(0.86);">0</div><div class="a" style="left:1100px;top:217px;width:125px;height:9px;background:#5285a6;"></div><div class="a" style="left:1226px;top:217px;width:49px;height:9px;background:#2f2f2f;"></div><div class="t" style="right:58.0px;top:218.2px;font-size:8.5px;color:#e8e8e8;transform:scaleX(0.86);transform-origin:100% 0;">Scale X</div><div class="t" style="left:1231.0px;top:218.2px;font-size:8.5px;color:#d8d8d8;transform:scaleX(0.86);">2.573</div><div class="a" style="left:1100px;top:227px;width:125px;height:10px;background:#5285a6;"></div><div class="a" style="left:1226px;top:227px;width:49px;height:10px;background:#2f2f2f;"></div><div class="t" style="right:58.0px;top:228.8px;font-size:8.5px;color:#e8e8e8;transform:scaleX(0.86);transform-origin:100% 0;">Scale Y</div><div class="t" style="left:1231.0px;top:228.8px;font-size:8.5px;color:#d8d8d8;transform:scaleX(0.86);">2.573</div><div class="a" style="left:1100px;top:238px;width:125px;height:9px;background:#5285a6;"></div><div class="a" style="left:1226px;top:238px;width:49px;height:9px;background:#2f2f2f;"></div><div class="t" style="right:58.0px;top:239.4px;font-size:8.5px;color:#e8e8e8;transform:scaleX(0.86);transform-origin:100% 0;">Scale Z</div><div class="t" style="left:1231.0px;top:239.4px;font-size:8.5px;color:#d8d8d8;transform:scaleX(0.86);">2.573</div><div class="a" style="left:1100px;top:248px;width:125px;height:10px;background:#5285a6;"></div><div class="a" style="left:1226px;top:248px;width:49px;height:10px;background:#2f2f2f;"></div><div class="t" style="right:58.0px;top:250.0px;font-size:8.5px;color:#e8e8e8;transform:scaleX(0.86);transform-origin:100% 0;">Visibility</div><div class="t" style="left:1231.0px;top:250.0px;font-size:8.5px;color:#d8d8d8;transform:scaleX(0.86);">on</div><div class="t" style="left:1100.0px;top:262.8px;font-size:8px;color:#d8d8d8;font-weight:bold;transform:scaleX(0.86);">SHAPES</div><div class="a" style="left:1100px;top:270px;width:175px;height:11px;background:#3a3a3a;"></div><div class="t" style="left:1106.0px;top:272.8px;font-size:8px;color:#e0e0e0;font-weight:bold;transform:scaleX(0.82);">emitShape</div><div class="t" style="left:1100.0px;top:283.8px;font-size:8px;color:#d8d8d8;font-weight:bold;transform:scaleX(0.86);">INPUTS</div><div class="t" style="left:1106.0px;top:294.3px;font-size:8px;color:#e0e0e0;font-weight:bold;transform:scaleX(0.82);">layer6</div><div class="t" style="left:1100.0px;top:304.8px;font-size:8px;color:#d8d8d8;font-weight:bold;transform:scaleX(0.86);">OUTPUTS</div><div class="t" style="left:1106.0px;top:316.0px;font-size:7.5px;color:#e0e0e0;font-weight:bold;transform:scaleX(0.82);">skull:fibers_skull:SKULL_fractal_and_fcurve_field_a...</div><div class="a" style="left:1100px;top:334px;width:175px;height:195px;background:#2b2b2b;"></div><div class="a" style="left:1163px;top:526px;width:50px;height:1px;background:#555;"></div><div class="a" style="left:1096px;top:530px;width:181px;height:166px;background:#3c3c3c;border:1px solid #4a4a4a"></div><div class="a" style="left:1097px;top:531px;width:40px;height:14px;background:#444;"></div><div class="t" style="left:1102.0px;top:534.4px;font-size:9px;color:#d0d0d0;transform:scaleX(0.86);">Display</div><div class="a" style="left:1138px;top:532px;width:32px;height:13px;background:#404040;"></div><div class="t" style="left:1145.0px;top:534.4px;font-size:9px;color:#c0c0c0;transform:scaleX(0.86);">Anim</div><div class="a" style="left:1097px;top:545px;width:179px;height:150px;background:#444;"></div><div class="t" style="left:1104.0px;top:546.4px;font-size:9px;color:#c8c8c8;transform:scaleX(0.86);">Layers</div><div class="t" style="left:1135.0px;top:546.4px;font-size:9px;color:#c8c8c8;transform:scaleX(0.86);">Options</div><div class="t" style="left:1172.0px;top:546.4px;font-size:9px;color:#c8c8c8;transform:scaleX(0.86);">Help</div><svg class="a" style="left:1212px;top:560px;" width="11" height="8" viewBox="0 0 11 8"><path d="M0.5 4L4 1.5H9V6.5H4Z" fill="#cfd8dc"/><circle cx="9" cy="3" r="1.8" fill="#5ab"/></svg><svg class="a" style="left:1227px;top:560px;" width="11" height="8" viewBox="0 0 11 8"><path d="M0.5 4L4 1.5H9V6.5H4Z" fill="#cfd8dc"/><circle cx="9" cy="3" r="1.8" fill="#5ab"/></svg><svg class="a" style="left:1248px;top:560px;" width="11" height="8" viewBox="0 0 11 8"><path d="M0.5 4L4 1.5H9V6.5H4Z" fill="#cfd8dc"/><circle cx="9" cy="3" r="1.8" fill="#5ab"/></svg><svg class="a" style="left:1264px;top:560px;" width="11" height="8" viewBox="0 0 11 8"><path d="M0.5 4L4 1.5H9V6.5H4Z" fill="#cfd8dc"/><circle cx="9" cy="3" r="1.8" fill="#5ab"/></svg><div class="a" style="left:1100px;top:573px;width:176px;height:116px;background:#2b2b2b;"></div><div class="a" style="left:1101px;top:576px;width:14px;height:11px;background:#232323;border:1px solid #3a3a3a"></div><div class="t" style="left:1105.0px;top:578.8px;font-size:8px;color:#e8e8e8;font-weight:bold;transform:scaleX(0.9);">V</div><div class="a" style="left:1116px;top:576px;width:14px;height:11px;background:#232323;border:1px solid #3a3a3a"></div><div class="t" style="left:1120.0px;top:578.8px;font-size:8px;color:#e8e8e8;font-weight:bold;transform:scaleX(0.9);">P</div><div class="a" style="left:1132px;top:576px;width:14px;height:11px;background:#232323;border:1px solid #3a3a3a"></div><svg class="a" style="left:1148px;top:576px;" width="11" height="12" viewBox="0 0 11 12"><path d="M0.5 11.5L10 1" stroke="#ccc" stroke-width="0.9"/><path d="M10 1V11.5" stroke="#555"/></svg><div class="t" style="left:1160.0px;top:578.4px;font-size:9px;color:#e0e0e0;transform:scaleX(0.86);">layer7</div><div class="a" style="left:1100px;top:588px;width:166px;height:14px;background:#5285a6;"></div><div class="a" style="left:1101px;top:590px;width:14px;height:11px;background:#4a7494;border:1px solid #6a98bb"></div><div class="a" style="left:1116px;top:590px;width:14px;height:11px;background:#4a7494;border:1px solid #6a98bb"></div><div class="t" style="left:1120.0px;top:592.1px;font-size:8px;color:#6fa0c4;font-weight:bold;transform:scaleX(0.9);">P</div><div class="a" style="left:1132px;top:590px;width:14px;height:11px;background:#4a7494;border:1px solid #6a98bb"></div><div class="t" style="left:1136.0px;top:592.1px;font-size:8px;color:#e8e8e8;font-weight:bold;transform:scaleX(0.9);">T</div><svg class="a" style="left:1148px;top:589px;" width="11" height="12" viewBox="0 0 11 12"><rect x="0" y="0" width="11" height="12" fill="#1e2a3a"/><path d="M0.5 11.5L10 1" stroke="#ddd" stroke-width="0.9"/></svg><div class="t" style="left:1160.0px;top:591.8px;font-size:9px;color:#1d2a36;transform:scaleX(0.86);">layer6</div><div class="a" style="left:1101px;top:603px;width:14px;height:11px;background:#232323;border:1px solid #3a3a3a"></div><div class="a" style="left:1116px;top:603px;width:14px;height:11px;background:#232323;border:1px solid #3a3a3a"></div><div class="t" style="left:1120.0px;top:605.5px;font-size:8px;color:#3e3e3e;font-weight:bold;transform:scaleX(0.9);">P</div><div class="a" style="left:1132px;top:603px;width:14px;height:11px;background:#232323;border:1px solid #3a3a3a"></div><svg class="a" style="left:1148px;top:603px;" width="11" height="12" viewBox="0 0 11 12"><path d="M0.5 11.5L10 1" stroke="#ccc" stroke-width="0.9"/><path d="M10 1V11.5" stroke="#555"/></svg><div class="t" style="left:1160.0px;top:605.1px;font-size:9px;color:#e0e0e0;transform:scaleX(0.86);">layer5</div><div class="a" style="left:1101px;top:617px;width:14px;height:11px;background:#232323;border:1px solid #3a3a3a"></div><div class="t" style="left:1105.0px;top:618.8px;font-size:8px;color:#e8e8e8;font-weight:bold;transform:scaleX(0.9);">V</div><div class="a" style="left:1116px;top:617px;width:14px;height:11px;background:#232323;border:1px solid #3a3a3a"></div><div class="t" style="left:1120.0px;top:618.8px;font-size:8px;color:#e8e8e8;font-weight:bold;transform:scaleX(0.9);">P</div><div class="a" style="left:1132px;top:617px;width:14px;height:11px;background:#232323;border:1px solid #3a3a3a"></div><svg class="a" style="left:1148px;top:616px;" width="11" height="12" viewBox="0 0 11 12"><path d="M0.5 11.5L10 1" stroke="#ccc" stroke-width="0.9"/><path d="M10 1V11.5" stroke="#555"/></svg><div class="t" style="left:1160.0px;top:618.4px;font-size:9px;color:#e0e0e0;transform:scaleX(0.86);">layer4</div><div class="a" style="left:1101px;top:630px;width:14px;height:11px;background:#232323;border:1px solid #3a3a3a"></div><div class="a" style="left:1116px;top:630px;width:14px;height:11px;background:#232323;border:1px solid #3a3a3a"></div><div class="t" style="left:1120.0px;top:632.2px;font-size:8px;color:#3e3e3e;font-weight:bold;transform:scaleX(0.9);">P</div><div class="a" style="left:1132px;top:630px;width:14px;height:11px;background:#232323;border:1px solid #3a3a3a"></div><svg class="a" style="left:1148px;top:629px;" width="11" height="12" viewBox="0 0 11 12"><path d="M0.5 11.5L10 1" stroke="#ccc" stroke-width="0.9"/><path d="M10 1V11.5" stroke="#555"/></svg><div class="t" style="left:1160.0px;top:631.8px;font-size:9px;color:#e0e0e0;transform:scaleX(0.86);">volu</div><div class="a" style="left:1101px;top:643px;width:14px;height:11px;background:#232323;border:1px solid #3a3a3a"></div><div class="a" style="left:1116px;top:643px;width:14px;height:11px;background:#232323;border:1px solid #3a3a3a"></div><div class="t" style="left:1120.0px;top:645.5px;font-size:8px;color:#3e3e3e;font-weight:bold;transform:scaleX(0.9);">P</div><div class="a" style="left:1132px;top:643px;width:14px;height:11px;background:#232323;border:1px solid #3a3a3a"></div><div class="t" style="left:1136.0px;top:645.5px;font-size:8px;color:#e8e8e8;font-weight:bold;transform:scaleX(0.9);">T</div><svg class="a" style="left:1148px;top:643px;" width="11" height="12" viewBox="0 0 11 12"><path d="M0.5 11.5L10 1" stroke="#ccc" stroke-width="0.9"/><path d="M10 1V11.5" stroke="#555"/></svg><div class="t" style="left:1160.0px;top:645.1px;font-size:9px;color:#e0e0e0;transform:scaleX(0.86);">layer3</div><div class="a" style="left:1101px;top:657px;width:14px;height:11px;background:#232323;border:1px solid #3a3a3a"></div><div class="a" style="left:1116px;top:657px;width:14px;height:11px;background:#232323;border:1px solid #3a3a3a"></div><div class="t" style="left:1120.0px;top:658.9px;font-size:8px;color:#3e3e3e;font-weight:bold;transform:scaleX(0.9);">P</div><div class="a" style="left:1132px;top:657px;width:14px;height:11px;background:#232323;border:1px solid #3a3a3a"></div><svg class="a" style="left:1148px;top:656px;" width="11" height="12" viewBox="0 0 11 12"><path d="M0.5 11.5L10 1" stroke="#ccc" stroke-width="0.9"/><path d="M10 1V11.5" stroke="#555"/></svg><div class="t" style="left:1160.0px;top:658.5px;font-size:9px;color:#e0e0e0;transform:scaleX(0.86);">vol</div><div class="a" style="left:1101px;top:670px;width:14px;height:11px;background:#232323;border:1px solid #3a3a3a"></div><div class="a" style="left:1116px;top:670px;width:14px;height:11px;background:#232323;border:1px solid #3a3a3a"></div><div class="t" style="left:1120.0px;top:672.2px;font-size:8px;color:#3e3e3e;font-weight:bold;transform:scaleX(0.9);">P</div><div class="a" style="left:1132px;top:670px;width:14px;height:11px;background:#232323;border:1px solid #3a3a3a"></div><svg class="a" style="left:1148px;top:669px;" width="11" height="12" viewBox="0 0 11 12"><path d="M0.5 11.5L10 1" stroke="#ccc" stroke-width="0.9"/><path d="M10 1V11.5" stroke="#555"/></svg><div class="t" style="left:1160.0px;top:671.9px;font-size:9px;color:#e0e0e0;transform:scaleX(0.86);">layer2</div><div class="a" style="left:1266px;top:575px;width:9px;height:112px;background:#333;"></div><svg class="a" style="left:1266px;top:575px;" width="9" height="6" viewBox="0 0 9 6"><path d="M1 5L4.5 1L8 5Z" fill="#ccc"/></svg><div class="a" style="left:1268px;top:582px;width:5px;height:95px;background:#5a5a5a;border-radius:2px"></div><svg class="a" style="left:1266px;top:681px;" width="9" height="6" viewBox="0 0 9 6"><path d="M1 1L4.5 5L8 1Z" fill="#ccc"/></svg><div class="a" style="left:1100px;top:688px;width:166px;height:7px;background:#333;"></div><svg class="a" style="left:1102px;top:688px;" width="5" height="7" viewBox="0 0 5 7"><path d="M4 0.5L0.5 3.5L4 6.5Z" fill="#ccc"/></svg><div class="a" style="left:1108px;top:689px;width:103px;height:5px;background:#5a5a5a;border-radius:2px"></div><svg class="a" style="left:1259px;top:688px;" width="5" height="7" viewBox="0 0 5 7"><path d="M1 0.5L4.5 3.5L1 6.5Z" fill="#ccc"/></svg>
<div class="a" style="left:0px;top:697px;width:1090px;height:3px;background:#373737;"></div><div class="a" style="left:0px;top:700px;width:1280px;height:20px;background:#3a3a3a;"></div><div class="a" style="left:2px;top:701px;width:1px;height:19px;background:#555;"></div><div class="a" style="left:4px;top:701px;width:1px;height:19px;background:#555;"></div><div class="a" style="left:8px;top:700px;width:1082px;height:20px;background:#2b2b2b;"></div><div class="a" style="left:14px;top:712px;width:1px;height:8px;background:#9a9a9a;"></div><div class="a" style="left:0;top:700px;width:1090px;height:20px;overflow:hidden"><div class="t" style="left:14.5px;top:3.2px;font-size:8px;color:#9a9a9a;transform:scaleX(0.9);">0</div></div><div class="a" style="left:35px;top:712px;width:1px;height:8px;background:#9a9a9a;"></div><div class="a" style="left:0;top:700px;width:1090px;height:20px;overflow:hidden"><div class="t" style="left:35.5px;top:3.2px;font-size:8px;color:#9a9a9a;transform:scaleX(0.9);">10</div></div><div class="a" style="left:56px;top:712px;width:1px;height:8px;background:#9a9a9a;"></div><div class="a" style="left:0;top:700px;width:1090px;height:20px;overflow:hidden"><div class="t" style="left:56.5px;top:3.2px;font-size:8px;color:#9a9a9a;transform:scaleX(0.9);">20</div></div><div class="a" style="left:78px;top:712px;width:1px;height:8px;background:#9a9a9a;"></div><div class="a" style="left:0;top:700px;width:1090px;height:20px;overflow:hidden"><div class="t" style="left:78.5px;top:3.2px;font-size:8px;color:#9a9a9a;transform:scaleX(0.9);">30</div></div><div class="a" style="left:99px;top:712px;width:1px;height:8px;background:#9a9a9a;"></div><div class="a" style="left:0;top:700px;width:1090px;height:20px;overflow:hidden"><div class="t" style="left:99.5px;top:3.2px;font-size:8px;color:#9a9a9a;transform:scaleX(0.9);">40</div></div><div class="a" style="left:120px;top:712px;width:1px;height:8px;background:#9a9a9a;"></div><div class="a" style="left:0;top:700px;width:1090px;height:20px;overflow:hidden"><div class="t" style="left:120.5px;top:3.2px;font-size:8px;color:#9a9a9a;transform:scaleX(0.9);">50</div></div><div class="a" style="left:141px;top:712px;width:1px;height:8px;background:#9a9a9a;"></div><div class="a" style="left:0;top:700px;width:1090px;height:20px;overflow:hidden"><div class="t" style="left:141.5px;top:3.2px;font-size:8px;color:#9a9a9a;transform:scaleX(0.9);">60</div></div><div class="a" style="left:163px;top:712px;width:1px;height:8px;background:#9a9a9a;"></div><div class="a" style="left:0;top:700px;width:1090px;height:20px;overflow:hidden"><div class="t" style="left:163.5px;top:3.2px;font-size:8px;color:#9a9a9a;transform:scaleX(0.9);">70</div></div><div class="a" style="left:184px;top:712px;width:1px;height:8px;background:#9a9a9a;"></div><div class="a" style="left:0;top:700px;width:1090px;height:20px;overflow:hidden"><div class="t" style="left:184.5px;top:3.2px;font-size:8px;color:#9a9a9a;transform:scaleX(0.9);">80</div></div><div class="a" style="left:205px;top:712px;width:1px;height:8px;background:#9a9a9a;"></div><div class="a" style="left:0;top:700px;width:1090px;height:20px;overflow:hidden"><div class="t" style="left:205.5px;top:3.2px;font-size:8px;color:#9a9a9a;transform:scaleX(0.9);">90</div></div><div class="a" style="left:226px;top:712px;width:1px;height:8px;background:#9a9a9a;"></div><div class="a" style="left:0;top:700px;width:1090px;height:20px;overflow:hidden"><div class="t" style="left:226.5px;top:3.2px;font-size:8px;color:#9a9a9a;transform:scaleX(0.9);">100</div></div><div class="a" style="left:248px;top:712px;width:1px;height:8px;background:#9a9a9a;"></div><div class="a" style="left:0;top:700px;width:1090px;height:20px;overflow:hidden"><div class="t" style="left:248.5px;top:3.2px;font-size:8px;color:#9a9a9a;transform:scaleX(0.9);">110</div></div><div class="a" style="left:269px;top:712px;width:1px;height:8px;background:#9a9a9a;"></div><div class="a" style="left:0;top:700px;width:1090px;height:20px;overflow:hidden"><div class="t" style="left:269.5px;top:3.2px;font-size:8px;color:#9a9a9a;transform:scaleX(0.9);">120</div></div><div class="a" style="left:290px;top:712px;width:1px;height:8px;background:#9a9a9a;"></div><div class="a" style="left:0;top:700px;width:1090px;height:20px;overflow:hidden"><div class="t" style="left:290.5px;top:3.2px;font-size:8px;color:#9a9a9a;transform:scaleX(0.9);">130</div></div><div class="a" style="left:311px;top:712px;width:1px;height:8px;background:#9a9a9a;"></div><div class="a" style="left:0;top:700px;width:1090px;height:20px;overflow:hidden"><div class="t" style="left:311.5px;top:3.2px;font-size:8px;color:#9a9a9a;transform:scaleX(0.9);">140</div></div><div class="a" style="left:332px;top:712px;width:1px;height:8px;background:#9a9a9a;"></div><div class="a" style="left:0;top:700px;width:1090px;height:20px;overflow:hidden"><div class="t" style="left:332.5px;top:3.2px;font-size:8px;color:#9a9a9a;transform:scaleX(0.9);">150</div></div><div class="a" style="left:354px;top:712px;width:1px;height:8px;background:#9a9a9a;"></div><div class="a" style="left:0;top:700px;width:1090px;height:20px;overflow:hidden"><div class="t" style="left:354.5px;top:3.2px;font-size:8px;color:#9a9a9a;transform:scaleX(0.9);">160</div></div><div class="a" style="left:375px;top:712px;width:1px;height:8px;background:#9a9a9a;"></div><div class="a" style="left:0;top:700px;width:1090px;height:20px;overflow:hidden"><div class="t" style="left:375.5px;top:3.2px;font-size:8px;color:#9a9a9a;transform:scaleX(0.9);">170</div></div><div class="a" style="left:396px;top:712px;width:1px;height:8px;background:#9a9a9a;"></div><div class="a" style="left:0;top:700px;width:1090px;height:20px;overflow:hidden"><div class="t" style="left:396.5px;top:3.2px;font-size:8px;color:#9a9a9a;transform:scaleX(0.9);">180</div></div><div class="a" style="left:417px;top:712px;width:1px;height:8px;background:#9a9a9a;"></div><div class="a" style="left:0;top:700px;width:1090px;height:20px;overflow:hidden"><div class="t" style="left:417.5px;top:3.2px;font-size:8px;color:#9a9a9a;transform:scaleX(0.9);">190</div></div><div class="a" style="left:439px;top:712px;width:1px;height:8px;background:#9a9a9a;"></div><div class="a" style="left:0;top:700px;width:1090px;height:20px;overflow:hidden"><div class="t" style="left:439.5px;top:3.2px;font-size:8px;color:#9a9a9a;transform:scaleX(0.9);">200</div></div><div class="a" style="left:460px;top:712px;width:1px;height:8px;background:#9a9a9a;"></div><div class="a" style="left:0;top:700px;width:1090px;height:20px;overflow:hidden"><div class="t" style="left:460.5px;top:3.2px;font-size:8px;color:#9a9a9a;transform:scaleX(0.9);">210</div></div><div class="a" style="left:481px;top:712px;width:1px;height:8px;background:#9a9a9a;"></div><div class="a" style="left:0;top:700px;width:1090px;height:20px;overflow:hidden"><div class="t" style="left:481.5px;top:3.2px;font-size:8px;color:#9a9a9a;transform:scaleX(0.9);">220</div></div><div class="a" style="left:502px;top:712px;width:1px;height:8px;background:#9a9a9a;"></div><div class="a" style="left:0;top:700px;width:1090px;height:20px;overflow:hidden"><div class="t" style="left:502.5px;top:3.2px;font-size:8px;color:#9a9a9a;transform:scaleX(0.9);">230</div></div><div class="a" style="left:524px;top:712px;width:1px;height:8px;background:#9a9a9a;"></div><div class="a" style="left:0;top:700px;width:1090px;height:20px;overflow:hidden"><div class="t" style="left:524.5px;top:3.2px;font-size:8px;color:#9a9a9a;transform:scaleX(0.9);">240</div></div><div class="a" style="left:545px;top:712px;width:1px;height:8px;background:#9a9a9a;"></div><div class="a" style="left:0;top:700px;width:1090px;height:20px;overflow:hidden"><div class="t" style="left:545.5px;top:3.2px;font-size:8px;color:#9a9a9a;transform:scaleX(0.9);">250</div></div><div class="a" style="left:566px;top:712px;width:1px;height:8px;background:#9a9a9a;"></div><div class="a" style="left:0;top:700px;width:1090px;height:20px;overflow:hidden"><div class="t" style="left:566.5px;top:3.2px;font-size:8px;color:#9a9a9a;transform:scaleX(0.9);">260</div></div><div class="a" style="left:587px;top:712px;width:1px;height:8px;background:#9a9a9a;"></div><div class="a" style="left:0;top:700px;width:1090px;height:20px;overflow:hidden"><div class="t" style="left:587.5px;top:3.2px;font-size:8px;color:#9a9a9a;transform:scaleX(0.9);">270</div></div><div class="a" style="left:609px;top:712px;width:1px;height:8px;background:#9a9a9a;"></div><div class="a" style="left:0;top:700px;width:1090px;height:20px;overflow:hidden"><div class="t" style="left:609.5px;top:3.2px;font-size:8px;color:#9a9a9a;transform:scaleX(0.9);">280</div></div><div class="a" style="left:630px;top:712px;width:1px;height:8px;background:#9a9a9a;"></div><div class="a" style="left:0;top:700px;width:1090px;height:20px;overflow:hidden"><div class="t" style="left:630.5px;top:3.2px;font-size:8px;color:#9a9a9a;transform:scaleX(0.9);">290</div></div><div class="a" style="left:651px;top:712px;width:1px;height:8px;background:#9a9a9a;"></div><div class="a" style="left:0;top:700px;width:1090px;height:20px;overflow:hidden"><div class="t" style="left:651.5px;top:3.2px;font-size:8px;color:#9a9a9a;transform:scaleX(0.9);">300</div></div><div class="a" style="left:672px;top:712px;width:1px;height:8px;background:#9a9a9a;"></div><div class="a" style="left:0;top:700px;width:1090px;height:20px;overflow:hidden"><div class="t" style="left:672.5px;top:3.2px;font-size:8px;color:#9a9a9a;transform:scaleX(0.9);">310</div></div><div class="a" style="left:694px;top:712px;width:1px;height:8px;background:#9a9a9a;"></div><div class="a" style="left:0;top:700px;width:1090px;height:20px;overflow:hidden"><div class="t" style="left:694.5px;top:3.2px;font-size:8px;color:#9a9a9a;transform:scaleX(0.9);">320</div></div><div class="a" style="left:715px;top:712px;width:1px;height:8px;background:#9a9a9a;"></div><div class="a" style="left:0;top:700px;width:1090px;height:20px;overflow:hidden"><div class="t" style="left:715.5px;top:3.2px;font-size:8px;color:#9a9a9a;transform:scaleX(0.9);">330</div></div><div class="a" style="left:736px;top:712px;width:1px;height:8px;background:#9a9a9a;"></div><div class="a" style="left:0;top:700px;width:1090px;height:20px;overflow:hidden"><div class="t" style="left:736.5px;top:3.2px;font-size:8px;color:#9a9a9a;transform:scaleX(0.9);">340</div></div><div class="a" style="left:757px;top:712px;width:1px;height:8px;background:#9a9a9a;"></div><div class="a" style="left:0;top:700px;width:1090px;height:20px;overflow:hidden"><div class="t" style="left:757.5px;top:3.2px;font-size:8px;color:#9a9a9a;transform:scaleX(0.9);">350</div></div><div class="a" style="left:779px;top:712px;width:1px;height:8px;background:#9a9a9a;"></div><div class="a" style="left:0;top:700px;width:1090px;height:20px;overflow:hidden"><div class="t" style="left:779.5px;top:3.2px;font-size:8px;color:#9a9a9a;transform:scaleX(0.9);">360</div></div><div class="a" style="left:800px;top:712px;width:1px;height:8px;background:#9a9a9a;"></div><div class="a" style="left:0;top:700px;width:1090px;height:20px;overflow:hidden"><div class="t" style="left:800.5px;top:3.2px;font-size:8px;color:#9a9a9a;transform:scaleX(0.9);">370</div></div><div class="a" style="left:821px;top:712px;width:1px;height:8px;background:#9a9a9a;"></div><div class="a" style="left:0;top:700px;width:1090px;height:20px;overflow:hidden"><div class="t" style="left:821.5px;top:3.2px;font-size:8px;color:#9a9a9a;transform:scaleX(0.9);">380</div></div><div class="a" style="left:842px;top:712px;width:1px;height:8px;background:#9a9a9a;"></div><div class="a" style="left:0;top:700px;width:1090px;height:20px;overflow:hidden"><div class="t" style="left:842.5px;top:3.2px;font-size:8px;color:#9a9a9a;transform:scaleX(0.9);">390</div></div><div class="a" style="left:863px;top:712px;width:1px;height:8px;background:#9a9a9a;"></div><div class="a" style="left:0;top:700px;width:1090px;height:20px;overflow:hidden"><div class="t" style="left:863.5px;top:3.2px;font-size:8px;color:#9a9a9a;transform:scaleX(0.9);">400</div></div><div class="a" style="left:885px;top:712px;width:1px;height:8px;background:#9a9a9a;"></div><div class="a" style="left:0;top:700px;width:1090px;height:20px;overflow:hidden"><div class="t" style="left:885.5px;top:3.2px;font-size:8px;color:#9a9a9a;transform:scaleX(0.9);">410</div></div><div class="a" style="left:906px;top:712px;width:1px;height:8px;background:#9a9a9a;"></div><div class="a" style="left:0;top:700px;width:1090px;height:20px;overflow:hidden"><div class="t" style="left:906.5px;top:3.2px;font-size:8px;color:#9a9a9a;transform:scaleX(0.9);">420</div></div><div class="a" style="left:927px;top:712px;width:1px;height:8px;background:#9a9a9a;"></div><div class="a" style="left:0;top:700px;width:1090px;height:20px;overflow:hidden"><div class="t" style="left:927.5px;top:3.2px;font-size:8px;color:#9a9a9a;transform:scaleX(0.9);">430</div></div><div class="a" style="left:948px;top:712px;width:1px;height:8px;background:#9a9a9a;"></div><div class="a" style="left:0;top:700px;width:1090px;height:20px;overflow:hidden"><div class="t" style="left:948.5px;top:3.2px;font-size:8px;color:#9a9a9a;transform:scaleX(0.9);">440</div></div><div class="a" style="left:970px;top:712px;width:1px;height:8px;background:#9a9a9a;"></div><div class="a" style="left:0;top:700px;width:1090px;height:20px;overflow:hidden"><div class="t" style="left:970.5px;top:3.2px;font-size:8px;color:#9a9a9a;transform:scaleX(0.9);">450</div></div><div class="a" style="left:991px;top:712px;width:1px;height:8px;background:#9a9a9a;"></div><div class="a" style="left:0;top:700px;width:1090px;height:20px;overflow:hidden"><div class="t" style="left:991.5px;top:3.2px;font-size:8px;color:#9a9a9a;transform:scaleX(0.9);">460</div></div><div class="a" style="left:1012px;top:712px;width:1px;height:8px;background:#9a9a9a;"></div><div class="a" style="left:0;top:700px;width:1090px;height:20px;overflow:hidden"><div class="t" style="left:1012.5px;top:3.2px;font-size:8px;color:#9a9a9a;transform:scaleX(0.9);">470</div></div><div class="a" style="left:1033px;top:712px;width:1px;height:8px;background:#9a9a9a;"></div><div class="a" style="left:0;top:700px;width:1090px;height:20px;overflow:hidden"><div class="t" style="left:1033.5px;top:3.2px;font-size:8px;color:#9a9a9a;transform:scaleX(0.9);">480</div></div><div class="a" style="left:1055px;top:712px;width:1px;height:8px;background:#9a9a9a;"></div><div class="a" style="left:0;top:700px;width:1090px;height:20px;overflow:hidden"><div class="t" style="left:1055.5px;top:3.2px;font-size:8px;color:#9a9a9a;transform:scaleX(0.9);">490</div></div><div class="a" style="left:1076px;top:712px;width:1px;height:8px;background:#9a9a9a;"></div><div class="a" style="left:0;top:700px;width:1090px;height:20px;overflow:hidden"><div class="t" style="left:1076.5px;top:3.2px;font-size:8px;color:#9a9a9a;transform:scaleX(0.9);">500</div></div><div class="a" style="left:34px;top:702px;width:1px;height:16px;background:#bbb;"></div><svg class="a" style="left:32px;top:712px;" width="5" height="7" viewBox="0 0 5 7"><circle cx="2.5" cy="2.5" r="1.8" fill="none" stroke="#ddd" stroke-width="1"/><path d="M4 3L2 7" stroke="#ddd"/></svg><div class="a" style="left:1090px;top:700px;width:190px;height:20px;background:#3a3a3a;"></div><div class="a" style="left:1090px;top:704px;width:56px;height:16px;background:#3d3d3d;"></div><div class="t" style="left:1092.0px;top:709.8px;font-size:8px;color:#6a6a6a;transform:scaleX(0.9);">0</div><svg class="a" style="left:1153px;top:707px;" width="12" height="11" viewBox="0 0 12 11"><path d="M1 1V10M2 5.5L6.5 1V10ZM6.5 5.5L11 1V10Z" fill="#c8c8c8" stroke="#c8c8c8" stroke-width="0.6"/></svg><svg class="a" style="left:1170px;top:707px;" width="9" height="11" viewBox="0 0 9 11"><path d="M1 1V10M2 5.5L8 1V10Z" fill="#c8c8c8" stroke="#c8c8c8" stroke-width="0.6"/></svg><svg class="a" style="left:1184px;top:706px;" width="11" height="13" viewBox="0 0 11 13"><path d="M1.5 0V13" stroke="#d8904a" stroke-width="1.4"/><path d="M3 6.5L10 2V11Z" fill="#c8c8c8"/></svg><svg class="a" style="left:1200px;top:706px;" width="11" height="12" viewBox="0 0 11 12"><path d="M0.5 6L10 0.5V11.5Z" fill="#c8c8c8"/></svg><div class="a" style="left:1215px;top:707px;width:12px;height:11px;background:#e83c3c;"></div><svg class="a" style="left:1231px;top:706px;" width="11" height="13" viewBox="0 0 11 13"><path d="M1 2L8 6.5L1 11Z" fill="#c8c8c8"/><path d="M9.5 0V13" stroke="#d8904a" stroke-width="1.4"/></svg><svg class="a" style="left:1248px;top:707px;" width="10" height="11" viewBox="0 0 10 11"><path d="M1 1V10L7 5.5Z M8.5 1V10" fill="#c8c8c8" stroke="#c8c8c8" stroke-width="0.6"/></svg><svg class="a" style="left:1261px;top:707px;" width="12" height="11" viewBox="0 0 12 11"><path d="M0.5 1V10L5 5.5ZM5 1V10L9.5 5.5ZM10.5 1V10" fill="#c8c8c8" stroke="#c8c8c8" stroke-width="0.6"/></svg>
</body></html>
